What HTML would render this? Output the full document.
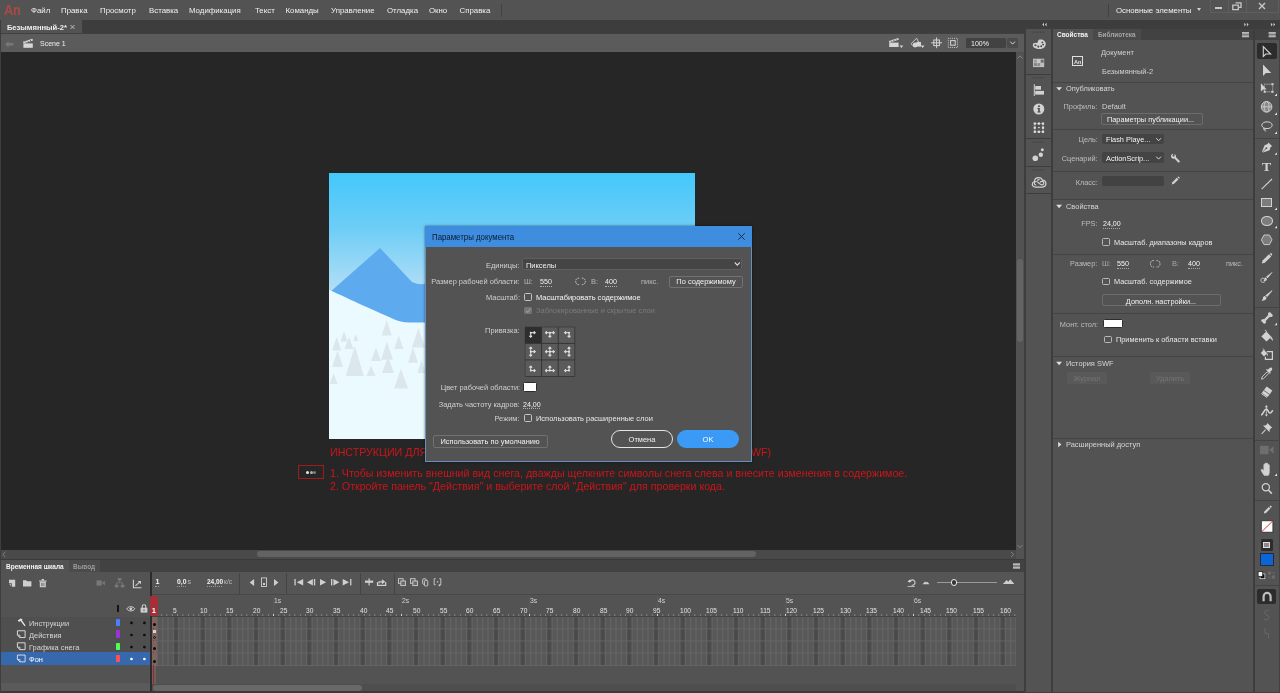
<!DOCTYPE html>
<html><head><meta charset="utf-8"><title>Animate</title>
<style>
*{box-sizing:border-box;margin:0;padding:0}
html,body{width:1280px;height:693px;overflow:hidden;background:#535353;font-family:"Liberation Sans",sans-serif;font-size:8px;color:#dcdcdc}
.abs{position:absolute}
#root{will-change:transform;position:relative;width:1280px;height:693px;overflow:hidden;background:#535353}
.t{position:absolute;white-space:nowrap;line-height:1}
</style></head><body>
<div id="root">
<div class="abs" style="left:0.00px;top:0.00px;width:1280.00px;height:20.00px;background:#535353;"></div>
<span class="t" style="top:3.00px;font-size:14.80px;color:#ad4a45;font-weight:bold;left:4.00px;transform:scaleX(0.86);transform-origin:0 0;letter-spacing:-0.3px;">An</span>
<span class="t" style="top:7.00px;font-size:7.85px;color:#f0f0f0;left:31.00px;transform:scaleX(1);transform-origin:0 0;">Файл</span>
<span class="t" style="top:7.00px;font-size:7.85px;color:#f0f0f0;left:61.00px;transform:scaleX(1);transform-origin:0 0;">Правка</span>
<span class="t" style="top:7.00px;font-size:7.85px;color:#f0f0f0;left:100.00px;transform:scaleX(1);transform-origin:0 0;">Просмотр</span>
<span class="t" style="top:7.00px;font-size:7.85px;color:#f0f0f0;left:149.00px;transform:scaleX(1);transform-origin:0 0;">Вставка</span>
<span class="t" style="top:7.00px;font-size:7.85px;color:#f0f0f0;left:189.00px;transform:scaleX(1);transform-origin:0 0;">Модификация</span>
<span class="t" style="top:7.00px;font-size:7.85px;color:#f0f0f0;left:255.00px;transform:scaleX(1);transform-origin:0 0;">Текст</span>
<span class="t" style="top:7.00px;font-size:7.85px;color:#f0f0f0;left:285.50px;transform:scaleX(1);transform-origin:0 0;">Команды</span>
<span class="t" style="top:7.00px;font-size:7.85px;color:#f0f0f0;left:331.00px;transform:scaleX(1);transform-origin:0 0;">Управление</span>
<span class="t" style="top:7.00px;font-size:7.85px;color:#f0f0f0;left:387.00px;transform:scaleX(1);transform-origin:0 0;">Отладка</span>
<span class="t" style="top:7.00px;font-size:7.85px;color:#f0f0f0;left:429.00px;transform:scaleX(1);transform-origin:0 0;">Окно</span>
<span class="t" style="top:7.00px;font-size:7.85px;color:#f0f0f0;left:459.50px;transform:scaleX(1);transform-origin:0 0;">Справка</span>
<div class="abs" style="left:501.00px;top:4.00px;width:1.00px;height:13.00px;background:#424242;"></div>
<div class="abs" style="left:1108.00px;top:4.00px;width:1.00px;height:13.00px;background:#424242;"></div>
<span class="t" style="top:7.00px;font-size:7.85px;color:#f0f0f0;left:1116.00px;transform:scaleX(1);transform-origin:0 0;">Основные элементы</span>
<div class="abs" style="left:1197px;top:8.4px;width:0;height:0;border-left:2.5px solid transparent;border-right:2.5px solid transparent;border-top:3px solid #d0d0d0"></div>
<div class="abs" style="left:1210.00px;top:0.00px;width:69.00px;height:13.00px;border:1px solid #5e5e5e;border-top:none;"></div>
<div class="abs" style="left:1228.00px;top:0.00px;width:1.00px;height:12.00px;background:#5e5e5e;"></div>
<div class="abs" style="left:1246.00px;top:0.00px;width:1.00px;height:12.00px;background:#5e5e5e;"></div>
<div class="abs" style="left:1215.00px;top:7.00px;width:7.00px;height:2.00px;background:#c8c8c8;"></div>
<svg class="abs" style="left:1232px;top:2px;overflow:visible;" width="11" height="10" viewBox="0 0 11 10"><g transform="translate(0.000 0.000)"><path d="M3.5 0.8h5.5v4.5h-2M0.8 3.2h5.5v4.5h-5.5z" fill="none" stroke="#c8c8c8" stroke-width="1.3"/></g></svg>
<svg class="abs" style="left:1258px;top:2px;overflow:visible;" width="9" height="9" viewBox="0 0 9 9"><g transform="translate(0.000 0.000)"><path d="M1 1l6 6M7 1l-6 6" fill="none" stroke="#c8c8c8" stroke-width="1.4"/></g></svg>
<div class="abs" style="left:0.00px;top:20.00px;width:1024.00px;height:14.00px;background:#3d3d3d;"></div>
<div class="abs" style="left:0.00px;top:20.00px;width:82.00px;height:14.00px;background:#535353;"></div>
<span class="t" style="top:24.00px;font-size:7.60px;color:#f0f0f0;font-weight:bold;left:6.90px;transform:scaleX(1);transform-origin:0 0;">Безымянный-2*</span>
<svg class="abs" style="left:70px;top:24px;overflow:visible;" width="6" height="6" viewBox="0 0 6 6"><g transform="translate(0.000 0.500)"><path d="M0.5 0.5l4 4M4.5 0.5l-4 4" stroke="#bdbdbd" stroke-width="1" fill="none"/></g></svg>
<div class="abs" style="left:0.00px;top:34.00px;width:1024.00px;height:18.00px;background:#5b5b5b;"></div>
<svg class="abs" style="left:5px;top:41px;overflow:visible;" width="9" height="7" viewBox="0 0 9 7"><g transform="translate(0.000 0.000)"><path d="M0 3.2L3.6 0v2h4.8v2.4H3.6v2z" fill="#777777"/></g></svg>
<svg class="abs" style="left:22px;top:38px;overflow:visible;" width="12" height="10" viewBox="0 0 12 10"><g transform="translate(0.800 0.200) scale(1.0000 1.0000) translate(-0.000 -0.000)"><path d="M0.2 3.6L9.6 0.6L10.2 2.4L0.8 5.4z" fill="#d6d6d6"/><path d="M2.2 3.2L3.4 4.4M4.6 2.4L5.8 3.6M7 1.6L8.2 2.8" stroke="#5b5b5b" stroke-width="0.9"/><rect x="0.6" y="5.2" width="9.4" height="4.4" fill="#d6d6d6"/></g></svg>
<span class="t" style="top:40.00px;font-size:7.80px;color:#efefef;left:40.00px;transform:scaleX(0.9);transform-origin:0 0;">Scene 1</span>
<svg class="abs" style="left:888px;top:37px;overflow:visible;" width="12" height="11" viewBox="0 0 12 11"><g transform="translate(0.600 0.400) scale(1.0000 1.0000) translate(-0.000 -0.000)"><path d="M0.2 3.6L9.6 0.6L10.2 2.4L0.8 5.4z" fill="#d6d6d6"/><path d="M2.2 3.2L3.4 4.4M4.6 2.4L5.8 3.6M7 1.6L8.2 2.8" stroke="#5b5b5b" stroke-width="0.9"/><rect x="0.6" y="5.2" width="9.4" height="4.4" fill="#d6d6d6"/></g></svg>
<svg class="abs" style="left:899px;top:45px;overflow:visible;" width="5" height="4" viewBox="0 0 5 4"><g transform="translate(0.600 0.600)"><path d="M0 0h3.6L1.8 2.4z" fill="#d6d6d6"/></g></svg>
<svg class="abs" style="left:910px;top:37px;overflow:visible;" width="12" height="12" viewBox="0 0 12 12"><g transform="translate(0.000 0.400)"><path d="M1 6.4L6.6 0.8L8.6 4.6L4.2 9.2z" fill="none" stroke="#d6d6d6" stroke-width="0.9"/><circle cx="5.2" cy="7.6" r="2.4" fill="#d6d6d6"/><rect x="6.4" y="4.6" width="4.6" height="4.6" fill="#d6d6d6"/></g></svg>
<svg class="abs" style="left:920px;top:45px;overflow:visible;" width="5" height="4" viewBox="0 0 5 4"><g transform="translate(0.800 0.600)"><path d="M0 0h3.6L1.8 2.4z" fill="#d6d6d6"/></g></svg>
<svg class="abs" style="left:931px;top:37px;overflow:visible;" width="12" height="12" viewBox="0 0 12 12"><g transform="translate(0.200 0.400)"><rect x="2.6" y="2.6" width="5.6" height="5.6" fill="none" stroke="#d6d6d6" stroke-width="1"/><path d="M5.4 0v10.8M0 5.4h10.8" stroke="#d6d6d6" stroke-width="1"/></g></svg>
<svg class="abs" style="left:947px;top:37px;overflow:visible;" width="12" height="12" viewBox="0 0 12 12"><g transform="translate(0.800 0.800)"><rect x="0.5" y="0.5" width="9.2" height="9.2" fill="none" stroke="#d6d6d6" stroke-width="0.8" stroke-dasharray="1 0.9"/><rect x="2.8" y="2.8" width="4.6" height="4.6" fill="none" stroke="#d6d6d6" stroke-width="1"/></g></svg>
<div class="abs" style="left:966.00px;top:37.60px;width:40.40px;height:10.60px;background:#424242;border-radius:1.5px;"></div>
<span class="t" style="top:40.00px;font-size:7.60px;color:#f0f0f0;left:970.70px;transform:scaleX(0.93);transform-origin:0 0;">100%</span>
<div class="abs" style="left:1007.30px;top:37.60px;width:10.60px;height:10.60px;background:#4b4b4b;border-radius:1.5px;"></div>
<svg class="abs" style="left:1009px;top:41px;overflow:visible;" width="7" height="4" viewBox="0 0 7 4"><g transform="translate(0.800 0.200)"><path d="M0.4 0.4L2.8 2.9L5.2 0.4" stroke="#d8d8d8" stroke-width="1" fill="none"/></g></svg>
<div class="abs" style="left:0.00px;top:51.50px;width:1024.00px;height:0.60px;background:#3a3a3a;"></div>
<div class="abs" style="left:0.00px;top:33.30px;width:1024.00px;height:0.90px;background:#404040;"></div>
<div class="abs" style="left:0.00px;top:52.00px;width:1016.00px;height:498.00px;background:#262626;"></div>
<div class="abs" style="left:329px;top:172.7px;width:366px;height:266px;background:linear-gradient(#43c8fc 0%,#6ccdf6 20%,#b2def6 44%,#c8e8f8 100%);overflow:hidden"><svg class="abs" style="left:0;top:0" width="366" height="266" viewBox="0 0 366 266"><path d="M0 120L51 75L83 109Q92 113 97 110L140 80L220 130L366 130L366 200L0 200z" fill="#5eaaee"/><path d="M0 116.8C20 126 50 140 68 147.4Q75 149.6 86 149.6L366 149.6L366 266L0 266z" fill="#ebfaff"/><g fill="#dce7ed"><path d="M7.7 164.0L12.2 177.6L3.2 177.6z"/><path d="M15.0 158.0L18.5 168.5L11.5 168.5z"/><path d="M20.0 164.0L24.5 176.0L15.5 176.0z"/><path d="M26.8 161.0L29.3 168.0L24.3 168.0z"/><path d="M8.6 177.6L14.1 194.0L3.1 194.0z"/><path d="M25.8 173.0L34.8 203.0L16.8 203.0z"/><path d="M4.6 200.0L8.6 211.0L0.6 211.0z"/><path d="M42.0 192.8L46.5 203.0L37.5 203.0z"/><path d="M47.0 174.6L52.0 188.0L42.0 188.0z"/><path d="M57.7 147.0L62.7 162.5L52.7 162.5z"/><path d="M58.0 168.5L64.0 186.7L52.0 186.7z"/><path d="M59.0 183.7L65.0 200.0L53.0 200.0z"/><path d="M69.8 162.5L74.3 176.0L65.3 176.0z"/><path d="M72.0 195.8L79.0 215.5L65.0 215.5z"/><path d="M84.0 174.6L89.0 189.7L79.0 189.7z"/><path d="M89.5 155.0L96.0 174.6L83.0 174.6z"/><path d="M92.5 186.7L96.5 200.0L88.5 200.0z"/></g></svg></div>
<span class="t" style="top:447.00px;font-size:10.67px;color:#cb151b;left:330.00px;transform:scaleX(1);transform-origin:0 0;">ИНСТРУКЦИИ ДЛЯ</span>
<span class="t" style="top:447.00px;font-size:10.67px;color:#cb151b;right:509.00px;transform:scaleX(1);transform-origin:100% 0;">WF)</span>
<span class="t" style="top:468.00px;font-size:10.67px;color:#cb151b;left:330.00px;transform:scaleX(1);transform-origin:0 0;">1. Чтобы изменить внешний вид снега, дважды щелкните символы снега слева и внесите изменения в содержимое.</span>
<span class="t" style="top:481.00px;font-size:10.67px;color:#cb151b;left:330.00px;transform:scaleX(1);transform-origin:0 0;">2. Откройте панель "Действия" и выберите слой "Действия" для проверки кода.</span>
<div class="abs" style="left:298.00px;top:464.50px;width:26.00px;height:14.00px;border:1px solid #a01a1e;"></div>
<div class="abs" style="left:306.00px;top:470.50px;width:3.00px;height:3.00px;background:#e8e8e8;border-radius:2px;"></div>
<div class="abs" style="left:309.50px;top:470.50px;width:3.00px;height:3.00px;background:#b0b0b0;border-radius:2px;"></div>
<div class="abs" style="left:313.00px;top:470.50px;width:3.00px;height:3.00px;background:#808080;border-radius:2px;"></div>
<div class="abs" style="left:424.90px;top:226.20px;width:327.20px;height:235.70px;background:#535353;box-shadow:0 0 2.5px rgba(0,0,0,.55);border:1px solid #6490bd;"></div>
<div class="abs" style="left:424.90px;top:226.20px;width:327.20px;height:20.60px;background:#3e8ddf;"></div>
<span class="t" style="top:233.00px;font-size:8.30px;color:#0b1b33;left:431.80px;transform:scaleX(0.945);transform-origin:0 0;">Параметры документа</span>
<svg class="abs" style="left:738px;top:233px;overflow:visible;" width="8" height="8" viewBox="0 0 8 8"><g transform="translate(0.000 0.000)"><path d="M0.3 0.3l6.4 6.4M6.7 0.3l-6.4 6.4" stroke="#10243f" stroke-width="0.9" fill="none"/></g></svg>
<span class="t" style="top:262.00px;font-size:7.90px;color:#cfcfcf;right:760.50px;transform:scaleX(0.945);transform-origin:100% 0;">Единицы:</span>
<div class="abs" style="left:521.70px;top:257.80px;width:220.60px;height:12.00px;background:#454545;border:1px solid #5f5f5f;border-radius:2px;"></div>
<span class="t" style="top:262.00px;font-size:7.90px;color:#f2f2f2;left:525.80px;transform:scaleX(0.945);transform-origin:0 0;">Пикселы</span>
<svg class="abs" style="left:734px;top:262px;overflow:visible;" width="7" height="5" viewBox="0 0 7 5"><g transform="translate(0.300 0.000)"><path d="M0.5 0.5l2.5 2.6l2.5-2.6" stroke="#d8d8d8" stroke-width="1.1" fill="none"/></g></svg>
<span class="t" style="top:278.00px;font-size:7.90px;color:#cfcfcf;right:760.00px;transform:scaleX(0.945);transform-origin:100% 0;">Размер рабочей области:</span>
<span class="t" style="top:278.00px;font-size:7.90px;color:#b8b8b8;left:523.60px;transform:scaleX(0.945);transform-origin:0 0;">Ш:</span>
<span class="t" style="top:278.00px;font-size:7.90px;color:#f2f2f2;left:540.00px;transform:scaleX(0.9);transform-origin:0 0;">550</span>
<div class="abs" style="left:540.00px;top:286.30px;width:11.60px;height:1.00px;border-top:1px dotted #b0b0b0;"></div>
<svg class="abs" style="left:575px;top:277px;overflow:visible;" width="11" height="10" viewBox="0 0 11 10"><g transform="translate(0.500 0.000)"><path d="M3.6 1.2H2.8a2.6 3.2 0 0 0 0 6.4h0.8M6.4 1.2h0.8a2.6 3.2 0 0 1 0 6.4H6.4" stroke="#d0d0d0" stroke-width="1" fill="none" stroke-dasharray="1.6 0.8"/></g></svg>
<span class="t" style="top:278.00px;font-size:7.90px;color:#b8b8b8;left:591.00px;transform:scaleX(0.945);transform-origin:0 0;">В:</span>
<span class="t" style="top:278.00px;font-size:7.90px;color:#f2f2f2;left:605.00px;transform:scaleX(0.9);transform-origin:0 0;">400</span>
<div class="abs" style="left:605.00px;top:286.30px;width:12.00px;height:1.00px;border-top:1px dotted #b0b0b0;"></div>
<span class="t" style="top:278.00px;font-size:7.90px;color:#b8b8b8;left:640.60px;transform:scaleX(0.945);transform-origin:0 0;">пикс.</span>
<div class="abs" style="left:669.20px;top:275.60px;width:74.10px;height:12.00px;border:1px solid #717171;border-radius:2px;"></div>
<span class="t" style="top:278.00px;font-size:7.90px;color:#f2f2f2;left:706.20px;transform:translateX(-50%) scaleX(0.945);">По содержимому</span>
<span class="t" style="top:294.00px;font-size:7.90px;color:#cfcfcf;right:760.00px;transform:scaleX(0.945);transform-origin:100% 0;">Масштаб:</span>
<div class="abs" style="left:524.20px;top:292.90px;width:7.70px;height:7.70px;border:1px solid #c4c4c4;border-radius:1.5px;"></div>
<span class="t" style="top:294.00px;font-size:7.90px;color:#f6f6f6;left:535.70px;transform:scaleX(0.945);transform-origin:0 0;">Масштабировать содержимое</span>
<div class="abs" style="left:524.20px;top:306.70px;width:7.70px;height:7.70px;background:#747474;border-radius:1.5px;"></div>
<svg class="abs" style="left:524px;top:306px;overflow:visible;" width="9" height="9" viewBox="0 0 9 9"><g transform="translate(0.200 0.700)"><path d="M1.8 4l1.6 1.8L6.2 2" stroke="#9a9a9a" stroke-width="1.1" fill="none"/></g></svg>
<span class="t" style="top:307.00px;font-size:7.90px;color:#7b7b7b;left:535.70px;transform:scaleX(0.945);transform-origin:0 0;">Заблокированные и скрытые слои</span>
<span class="t" style="top:327.00px;font-size:7.90px;color:#cfcfcf;right:760.00px;transform:scaleX(0.945);transform-origin:100% 0;">Привязка:</span>
<svg class="abs" style="left:524px;top:326px;overflow:visible;" width="52" height="51" viewBox="0 0 52 51"><g transform="translate(0.800 0.700)"><rect width="50.4" height="50.1" fill="#333333"/></g></svg>
<svg class="abs" style="left:524px;top:326px;overflow:visible;" width="52" height="51" viewBox="0 0 52 51"><g transform="translate(0.800 0.700)"><rect x="0.60" y="0.60" width="15.7" height="15.6" fill="#2e2e2e"/><path d="M5.95 6.00L9.25 6.00M10.75 6.00L9.25 7.30L9.25 4.70zM5.95 6.00L5.95 9.30M5.95 10.80L4.65 9.30L7.25 9.30z" stroke="#dedede" stroke-width="1" fill="#dedede" stroke-linejoin="miter"/><circle cx="5.95" cy="6.00" r="1" fill="#e6e6e6"/><rect x="17.25" y="0.60" width="15.7" height="15.6" fill="#5b5b5b"/><path d="M25.10 6.00L21.80 6.00M20.30 6.00L21.80 4.70L21.80 7.30zM25.10 6.00L28.40 6.00M29.90 6.00L28.40 7.30L28.40 4.70zM25.10 6.00L25.10 9.30M25.10 10.80L23.80 9.30L26.40 9.30z" stroke="#dedede" stroke-width="1" fill="#dedede" stroke-linejoin="miter"/><circle cx="25.10" cy="6.00" r="1" fill="#e6e6e6"/><rect x="33.90" y="0.60" width="15.7" height="15.6" fill="#5b5b5b"/><path d="M44.25 6.00L40.95 6.00M39.45 6.00L40.95 4.70L40.95 7.30zM44.25 6.00L44.25 9.30M44.25 10.80L42.95 9.30L45.55 9.30z" stroke="#dedede" stroke-width="1" fill="#dedede" stroke-linejoin="miter"/><circle cx="44.25" cy="6.00" r="1" fill="#e6e6e6"/><rect x="0.60" y="17.15" width="15.7" height="15.6" fill="#5b5b5b"/><path d="M5.95 24.95L5.95 21.65M5.95 20.15L7.25 21.65L4.65 21.65zM5.95 24.95L9.25 24.95M10.75 24.95L9.25 26.25L9.25 23.65zM5.95 24.95L5.95 28.25M5.95 29.75L4.65 28.25L7.25 28.25z" stroke="#dedede" stroke-width="1" fill="#dedede" stroke-linejoin="miter"/><circle cx="5.95" cy="24.95" r="1" fill="#e6e6e6"/><rect x="17.25" y="17.15" width="15.7" height="15.6" fill="#5b5b5b"/><path d="M25.10 24.95L21.80 24.95M20.30 24.95L21.80 23.65L21.80 26.25zM25.10 24.95L28.40 24.95M29.90 24.95L28.40 26.25L28.40 23.65zM25.10 24.95L25.10 21.65M25.10 20.15L26.40 21.65L23.80 21.65zM25.10 24.95L25.10 28.25M25.10 29.75L23.80 28.25L26.40 28.25z" stroke="#dedede" stroke-width="1" fill="#dedede" stroke-linejoin="miter"/><circle cx="25.10" cy="24.95" r="1" fill="#e6e6e6"/><rect x="33.90" y="17.15" width="15.7" height="15.6" fill="#5b5b5b"/><path d="M44.25 24.95L44.25 21.65M44.25 20.15L45.55 21.65L42.95 21.65zM44.25 24.95L40.95 24.95M39.45 24.95L40.95 23.65L40.95 26.25zM44.25 24.95L44.25 28.25M44.25 29.75L42.95 28.25L45.55 28.25z" stroke="#dedede" stroke-width="1" fill="#dedede" stroke-linejoin="miter"/><circle cx="44.25" cy="24.95" r="1" fill="#e6e6e6"/><rect x="0.60" y="33.70" width="15.7" height="15.6" fill="#5b5b5b"/><path d="M5.95 43.90L5.95 40.60M5.95 39.10L7.25 40.60L4.65 40.60zM5.95 43.90L9.25 43.90M10.75 43.90L9.25 45.20L9.25 42.60z" stroke="#dedede" stroke-width="1" fill="#dedede" stroke-linejoin="miter"/><circle cx="5.95" cy="43.90" r="1" fill="#e6e6e6"/><rect x="17.25" y="33.70" width="15.7" height="15.6" fill="#5b5b5b"/><path d="M25.10 43.90L21.80 43.90M20.30 43.90L21.80 42.60L21.80 45.20zM25.10 43.90L28.40 43.90M29.90 43.90L28.40 45.20L28.40 42.60zM25.10 43.90L25.10 40.60M25.10 39.10L26.40 40.60L23.80 40.60z" stroke="#dedede" stroke-width="1" fill="#dedede" stroke-linejoin="miter"/><circle cx="25.10" cy="43.90" r="1" fill="#e6e6e6"/><rect x="33.90" y="33.70" width="15.7" height="15.6" fill="#5b5b5b"/><path d="M44.25 43.90L40.95 43.90M39.45 43.90L40.95 42.60L40.95 45.20zM44.25 43.90L44.25 40.60M44.25 39.10L45.55 40.60L42.95 40.60z" stroke="#dedede" stroke-width="1" fill="#dedede" stroke-linejoin="miter"/><circle cx="44.25" cy="43.90" r="1" fill="#e6e6e6"/></g></svg>
<span class="t" style="top:384.00px;font-size:7.90px;color:#cfcfcf;right:760.00px;transform:scaleX(0.945);transform-origin:100% 0;">Цвет рабочей области:</span>
<div class="abs" style="left:523.30px;top:381.70px;width:13.30px;height:10.80px;background:#ffffff;border:1px solid #2c2c2c;border-radius:1.5px;"></div>
<span class="t" style="top:401.00px;font-size:7.90px;color:#cfcfcf;right:760.50px;transform:scaleX(0.945);transform-origin:100% 0;">Задать частоту кадров:</span>
<span class="t" style="top:401.00px;font-size:7.90px;color:#f2f2f2;left:522.70px;transform:scaleX(0.9);transform-origin:0 0;">24,00</span>
<div class="abs" style="left:522.70px;top:408.30px;width:17.30px;height:1.00px;border-top:1px dotted #b0b0b0;"></div>
<span class="t" style="top:415.00px;font-size:7.90px;color:#cfcfcf;right:760.40px;transform:scaleX(0.945);transform-origin:100% 0;">Режим:</span>
<div class="abs" style="left:524.20px;top:414.40px;width:7.70px;height:7.70px;border:1px solid #c4c4c4;border-radius:1.5px;"></div>
<span class="t" style="top:415.00px;font-size:7.90px;color:#e8e8e8;left:535.60px;transform:scaleX(0.945);transform-origin:0 0;">Использовать расширенные слои</span>
<div class="abs" style="left:432.70px;top:435.10px;width:115.00px;height:12.60px;border:1px solid #717171;border-radius:2px;"></div>
<span class="t" style="top:438.00px;font-size:7.90px;color:#f2f2f2;left:490.00px;transform:translateX(-50%) scaleX(0.945);">Использовать по умолчанию</span>
<div class="abs" style="left:611.00px;top:430.20px;width:61.80px;height:18.00px;border:1px solid #e4e4e4;border-radius:9px;"></div>
<span class="t" style="top:436.00px;font-size:7.90px;color:#f2f2f2;left:641.60px;transform:translateX(-50%) scaleX(0.945);">Отмена</span>
<div class="abs" style="left:677.00px;top:430.20px;width:62.00px;height:18.00px;background:#3b9af5;border-radius:9px;"></div>
<span class="t" style="top:436.00px;font-size:7.90px;color:#ffffff;left:708.00px;transform:translateX(-50%) scaleX(0.945);">OK</span>
<div class="abs" style="left:1016.00px;top:52.00px;width:8.00px;height:507.00px;background:#525252;"></div>
<div class="abs" style="left:1017.00px;top:259.00px;width:6.30px;height:82.50px;background:#636363;border-radius:3px;"></div>
<svg class="abs" style="left:1017px;top:55px;overflow:visible;" width="7" height="5" viewBox="0 0 7 5"><g transform="translate(0.000 0.000)"><path d="M0.5 3.5L3 0.8L5.5 3.5" stroke="#8a8a8a" stroke-width="0.9" fill="none"/></g></svg>
<svg class="abs" style="left:1017px;top:544px;overflow:visible;" width="7" height="5" viewBox="0 0 7 5"><g transform="translate(0.000 0.500)"><path d="M0.5 0.5L3 3.2L5.5 0.5" stroke="#8a8a8a" stroke-width="0.9" fill="none"/></g></svg>
<div class="abs" style="left:0.00px;top:550.00px;width:1016.00px;height:9.00px;background:#4a4a4a;"></div>
<div class="abs" style="left:257.00px;top:551.30px;width:499.00px;height:6.00px;background:#636363;border-radius:3px;"></div>
<svg class="abs" style="left:2px;top:551px;overflow:visible;" width="5" height="7" viewBox="0 0 5 7"><g transform="translate(0.000 0.500)"><path d="M3.4 0.5L0.8 3L3.4 5.5" stroke="#8a8a8a" stroke-width="0.9" fill="none"/></g></svg>
<svg class="abs" style="left:1010px;top:551px;overflow:visible;" width="5" height="7" viewBox="0 0 5 7"><g transform="translate(0.500 0.500)"><path d="M0.6 0.5L3.2 3L0.6 5.5" stroke="#8a8a8a" stroke-width="0.9" fill="none"/></g></svg>
<div class="abs" style="left:0.00px;top:559.00px;width:1024.00px;height:134.00px;background:#535353;"></div>
<div class="abs" style="left:0.00px;top:559.00px;width:1024.00px;height:1.00px;background:#3a3a3a;"></div>
<div class="abs" style="left:0.00px;top:560.00px;width:1024.00px;height:12.00px;background:#424242;"></div>
<div class="abs" style="left:0.00px;top:560.00px;width:68.80px;height:12.00px;background:#535353;"></div>
<span class="t" style="top:563.00px;font-size:7.30px;color:#f4f4f4;font-weight:bold;left:5.60px;transform:scaleX(0.89);transform-origin:0 0;">Временная шкала</span>
<div class="abs" style="left:69.30px;top:560.00px;width:31.00px;height:12.00px;background:#4b4b4b;"></div>
<span class="t" style="top:563.00px;font-size:7.30px;color:#9a9a9a;font-weight:bold;left:73.40px;transform:scaleX(0.89);transform-origin:0 0;">Вывод</span>
<svg class="abs" style="left:1013px;top:563px;overflow:visible;" width="8" height="6" viewBox="0 0 8 6"><g transform="translate(0.000 0.400)"><rect width="7" height="5.2" fill="#7c7c7c"/><rect width="7" height="1.7" fill="#b8b8b8"/><rect y="3.5" width="7" height="1.7" fill="#b8b8b8"/></g></svg>
<div class="abs" style="left:152.00px;top:572.00px;width:872.00px;height:22.00px;background:#555555;"></div>
<div class="abs" style="left:152.00px;top:594.00px;width:872.00px;height:1.00px;background:#484848;"></div>
<div class="abs" style="left:238.70px;top:572.50px;width:1.00px;height:21.50px;background:#444444;"></div>
<div class="abs" style="left:286.30px;top:572.50px;width:1.00px;height:21.50px;background:#444444;"></div>
<div class="abs" style="left:360.00px;top:572.50px;width:1.00px;height:21.50px;background:#444444;"></div>
<div class="abs" style="left:393.50px;top:572.50px;width:1.00px;height:21.50px;background:#444444;"></div>
<svg class="abs" style="left:8px;top:579px;overflow:visible;" width="8" height="8" viewBox="0 0 8 8"><g transform="translate(0.600 0.700)"><path d="M0.4 0h6.2v7H3.2V3.6H0.4z" fill="#cfcfcf"/><path d="M0.6 4.6h1.8v1.8z" fill="#cfcfcf"/></g></svg>
<svg class="abs" style="left:23px;top:579px;overflow:visible;" width="9" height="8" viewBox="0 0 9 8"><g transform="translate(0.000 0.600)"><path d="M0 0.6h3.2l0.8 1h4.4v5.4H0z" fill="#cfcfcf"/></g></svg>
<svg class="abs" style="left:39px;top:579px;overflow:visible;" width="8" height="9" viewBox="0 0 8 9"><g transform="translate(0.000 0.000)"><path d="M0 1.4h7.6v1H0zM2.6 0h2.4v1.2H2.6zM0.8 2.8h6v5.4h-6z" fill="#cfcfcf"/><path d="M2.6 3.8v3.4M3.8 3.8v3.4M5 3.8v3.4" stroke="#535353" stroke-width="0.6"/></g></svg>
<svg class="abs" style="left:96px;top:580px;overflow:visible;" width="9" height="7" viewBox="0 0 9 7"><g transform="translate(0.500 0.000)"><rect x="0" y="0.4" width="5.2" height="5.2" fill="#787878"/><path d="M5.4 3L8.4 0.6v4.8z" fill="#787878"/></g></svg>
<svg class="abs" style="left:114px;top:578px;overflow:visible;" width="11" height="11" viewBox="0 0 11 11"><g transform="translate(0.800 0.000)"><rect x="3" y="0" width="3.6" height="2.6" fill="#787878"/><rect x="0" y="6.6" width="3.6" height="2.8" fill="#787878"/><rect x="6" y="6.6" width="3.6" height="2.8" fill="#787878"/><path d="M4.8 2.6v2.2M1.8 6.6V4.8h6v1.8" stroke="#787878" stroke-width="0.8" fill="none"/></g></svg>
<svg class="abs" style="left:132px;top:579px;overflow:visible;" width="10" height="10" viewBox="0 0 10 10"><g transform="translate(0.800 0.800)"><path d="M0.6 0v7.9h8" stroke="#cfcfcf" stroke-width="1.1" fill="none"/><path d="M2.6 6L6.6 2.6" stroke="#cfcfcf" stroke-width="1.1" fill="none"/><path d="M4.8 1.2h3.4v3.2z" fill="#cfcfcf"/></g></svg>
<span class="t" style="top:578.00px;font-size:7.20px;color:#f4f4f4;font-weight:bold;left:155.50px;transform:scaleX(1);transform-origin:0 0;">1</span>
<div class="abs" style="left:155.30px;top:586.00px;width:3.40px;height:1.00px;border-top:1px dotted #9a9a9a;"></div>
<span class="t" style="top:578.00px;font-size:7.20px;color:#f4f4f4;font-weight:bold;left:176.90px;transform:scaleX(0.95);transform-origin:0 0;">0,0</span>
<span class="t" style="top:578.00px;font-size:7.00px;color:#bdbdbd;left:187.60px;transform:scaleX(1);transform-origin:0 0;">s</span>
<div class="abs" style="left:176.90px;top:586.00px;width:9.40px;height:1.00px;border-top:1px dotted #9a9a9a;"></div>
<span class="t" style="top:578.00px;font-size:7.20px;color:#f4f4f4;font-weight:bold;left:206.90px;transform:scaleX(0.9);transform-origin:0 0;">24,00</span>
<span class="t" style="top:578.00px;font-size:7.00px;color:#bdbdbd;left:223.80px;transform:scaleX(0.95);transform-origin:0 0;">к/с</span>
<div class="abs" style="left:206.90px;top:586.00px;width:15.40px;height:1.00px;border-top:1px dotted #9a9a9a;"></div>
<svg class="abs" style="left:249px;top:579px;overflow:visible;" width="6" height="8" viewBox="0 0 6 8"><g transform="translate(0.700 0.000)"><path d="M4.4 0v7L0 3.5z" fill="#cfcfcf"/></g></svg>
<svg class="abs" style="left:261px;top:577px;overflow:visible;" width="7" height="11" viewBox="0 0 7 11"><g transform="translate(0.000 0.400)"><rect x="0.5" y="0.5" width="5" height="8.6" fill="none" stroke="#cfcfcf" stroke-width="0.9"/><rect x="2" y="5.6" width="2" height="2" fill="#cfcfcf"/></g></svg>
<svg class="abs" style="left:274px;top:579px;overflow:visible;" width="5" height="8" viewBox="0 0 5 8"><g transform="translate(0.000 0.000)"><path d="M0 0v7L4.4 3.5z" fill="#cfcfcf"/></g></svg>
<svg class="abs" style="left:294px;top:579px;overflow:visible;" width="10" height="7" viewBox="0 0 10 7"><g transform="translate(0.400 0.000)"><rect x="0" y="0" width="1.3" height="6.4" fill="#cfcfcf"/><path d="M8.8 0v6.4L2.4 3.2z" fill="#cfcfcf"/></g></svg>
<svg class="abs" style="left:306px;top:579px;overflow:visible;" width="10" height="7" viewBox="0 0 10 7"><g transform="translate(0.900 0.000)"><path d="M6 0v6.4L0 3.2z" fill="#cfcfcf"/><rect x="7" y="0" width="1.3" height="6.4" fill="#cfcfcf"/></g></svg>
<svg class="abs" style="left:320px;top:579px;overflow:visible;" width="7" height="7" viewBox="0 0 7 7"><g transform="translate(0.000 0.000)"><path d="M0 0v6.4L6.2 3.2z" fill="#cfcfcf"/></g></svg>
<svg class="abs" style="left:330px;top:579px;overflow:visible;" width="10" height="7" viewBox="0 0 10 7"><g transform="translate(0.600 0.000)"><rect x="0.4" y="0" width="1.3" height="6.4" fill="#cfcfcf"/><path d="M2.8 0v6.4L8.8 3.2z" fill="#cfcfcf"/></g></svg>
<svg class="abs" style="left:342px;top:579px;overflow:visible;" width="10" height="7" viewBox="0 0 10 7"><g transform="translate(0.700 0.000)"><path d="M0 0v6.4L6.4 3.2z" fill="#cfcfcf"/><rect x="7.4" y="0" width="1.3" height="6.4" fill="#cfcfcf"/></g></svg>
<svg class="abs" style="left:365px;top:578px;overflow:visible;" width="9" height="8" viewBox="0 0 9 8"><g transform="translate(0.000 0.400)"><rect x="0" y="2.2" width="8.2" height="2.2" fill="#cfcfcf"/><rect x="3.5" y="0" width="1.2" height="7" fill="#cfcfcf"/></g></svg>
<svg class="abs" style="left:376px;top:578px;overflow:visible;" width="11" height="9" viewBox="0 0 11 9"><g transform="translate(0.900 0.600)"><path d="M0.6 3.4v3.4h8.2V3.4M2.2 4.8V3.2h3.4" stroke="#cfcfcf" stroke-width="1.2" fill="none"/><path d="M5 0.6L8.4 3.2L5 5.6z" fill="#cfcfcf"/></g></svg>
<svg class="abs" style="left:398px;top:578px;overflow:visible;" width="8" height="9" viewBox="0 0 8 9"><g transform="translate(0.000 0.200)"><rect x="0.5" y="0.5" width="4.6" height="4.6" fill="none" stroke="#cfcfcf" stroke-width="0.9"/><rect x="2.8" y="2.8" width="4.6" height="4.6" fill="#6a6a6a" stroke="#cfcfcf" stroke-width="0.9"/></g></svg>
<svg class="abs" style="left:410px;top:578px;overflow:visible;" width="8" height="9" viewBox="0 0 8 9"><g transform="translate(0.000 0.200)"><rect x="0.5" y="0.5" width="4.6" height="4.6" fill="none" stroke="#cfcfcf" stroke-width="0.9"/><rect x="2.8" y="2.8" width="4.6" height="4.6" fill="#6a6a6a" stroke="#cfcfcf" stroke-width="0.9"/></g></svg>
<svg class="abs" style="left:422px;top:578px;overflow:visible;" width="7" height="9" viewBox="0 0 7 9"><g transform="translate(0.200 0.200)"><rect x="0.5" y="0.5" width="3.4" height="5.6" rx="1" fill="none" stroke="#cfcfcf" stroke-width="0.9"/><rect x="2.2" y="2.2" width="3.4" height="5.6" rx="1" fill="#5a5a5a" stroke="#cfcfcf" stroke-width="0.9"/></g></svg>
<svg class="abs" style="left:433px;top:578px;overflow:visible;" width="9" height="9" viewBox="0 0 9 9"><g transform="translate(0.700 0.200)"><path d="M2 0.5H0.5v6H2M5.6 0.5h1.5v6H5.6" stroke="#cfcfcf" stroke-width="0.9" fill="none"/><rect x="3.2" y="3" width="1.3" height="1.3" fill="#cfcfcf"/><path d="M4.4 6.6h2.8L5.8 8.2z" fill="#cfcfcf"/></g></svg>
<svg class="abs" style="left:907px;top:579px;overflow:visible;" width="9" height="8" viewBox="0 0 9 8"><g transform="translate(0.000 0.000)"><path d="M2.6 3.6A2.7 2.7 0 1 1 4.6 6.2" stroke="#cfcfcf" stroke-width="1.1" fill="none"/><path d="M0.4 3h4.2L2.5 0.6z" fill="#cfcfcf"/><rect x="0.6" y="7" width="7.2" height="0.8" fill="#cfcfcf"/></g></svg>
<svg class="abs" style="left:922px;top:581px;overflow:visible;" width="8" height="4" viewBox="0 0 8 4"><g transform="translate(0.500 0.000)"><path d="M0 3.2L2.6 0.4L3.8 1.6L4.8 0.8L7 3.2z" fill="#cfcfcf"/></g></svg>
<div class="abs" style="left:936.60px;top:582.20px;width:60.00px;height:0.90px;background:#9a9a9a;"></div>
<div class="abs" style="left:950.8px;top:579.3px;width:6.6px;height:6.6px;border-radius:50%;background:#333;border:1.3px solid #ececec"></div>
<svg class="abs" style="left:1002px;top:579px;overflow:visible;" width="13" height="6" viewBox="0 0 13 6"><g transform="translate(0.900 0.300)"><path d="M0 4.8L3.8 0.8L5.4 2.4L7.4 0L11.4 4.8z" fill="#cfcfcf"/></g></svg>
<div class="abs" style="left:150.20px;top:572.00px;width:1.90px;height:121.00px;background:#2c2c2c;"></div>
<div class="abs" style="left:116.60px;top:605.40px;width:2.80px;height:6.80px;border:0.9px solid #141414;"></div>
<svg class="abs" style="left:126px;top:605px;overflow:visible;" width="10" height="8" viewBox="0 0 10 8"><g transform="translate(0.500 0.600)"><path d="M0.3 3.2C2 0.4 6.6 0.4 8.3 3.2C6.6 6 2 6 0.3 3.2z" fill="none" stroke="#cfcfcf" stroke-width="1"/><circle cx="4.3" cy="3.2" r="1.4" fill="#cfcfcf"/></g></svg>
<svg class="abs" style="left:140px;top:604px;overflow:visible;" width="8" height="9" viewBox="0 0 8 9"><g transform="translate(0.600 0.000)"><path d="M1.6 4V2.6a1.8 1.8 0 0 1 3.6 0V4" stroke="#cfcfcf" stroke-width="1.1" fill="none"/><rect x="0" y="3.8" width="6.8" height="4.8" fill="#cfcfcf"/><rect x="2.9" y="5.4" width="1" height="1.6" fill="#535353"/></g></svg>
<div class="abs" style="left:273.30px;top:595.00px;width:0.90px;height:21.00px;background:#5a5a5a;"></div>
<span class="t" style="top:597.00px;font-size:7.60px;color:#d4d4d4;left:274.30px;transform:scaleX(0.9);transform-origin:0 0;">1s</span>
<div class="abs" style="left:273.00px;top:614.00px;width:1.00px;height:2.20px;background:#f0f0f0;"></div>
<div class="abs" style="left:401.30px;top:595.00px;width:0.90px;height:21.00px;background:#5a5a5a;"></div>
<span class="t" style="top:597.00px;font-size:7.60px;color:#d4d4d4;left:402.30px;transform:scaleX(0.9);transform-origin:0 0;">2s</span>
<div class="abs" style="left:401.00px;top:614.00px;width:1.00px;height:2.20px;background:#f0f0f0;"></div>
<div class="abs" style="left:529.30px;top:595.00px;width:0.90px;height:21.00px;background:#5a5a5a;"></div>
<span class="t" style="top:597.00px;font-size:7.60px;color:#d4d4d4;left:530.30px;transform:scaleX(0.9);transform-origin:0 0;">3s</span>
<div class="abs" style="left:529.00px;top:614.00px;width:1.00px;height:2.20px;background:#f0f0f0;"></div>
<div class="abs" style="left:657.30px;top:595.00px;width:0.90px;height:21.00px;background:#5a5a5a;"></div>
<span class="t" style="top:597.00px;font-size:7.60px;color:#d4d4d4;left:658.30px;transform:scaleX(0.9);transform-origin:0 0;">4s</span>
<div class="abs" style="left:657.00px;top:614.00px;width:1.00px;height:2.20px;background:#f0f0f0;"></div>
<div class="abs" style="left:785.30px;top:595.00px;width:0.90px;height:21.00px;background:#5a5a5a;"></div>
<span class="t" style="top:597.00px;font-size:7.60px;color:#d4d4d4;left:786.30px;transform:scaleX(0.9);transform-origin:0 0;">5s</span>
<div class="abs" style="left:785.00px;top:614.00px;width:1.00px;height:2.20px;background:#f0f0f0;"></div>
<div class="abs" style="left:913.30px;top:595.00px;width:0.90px;height:21.00px;background:#5a5a5a;"></div>
<span class="t" style="top:597.00px;font-size:7.60px;color:#d4d4d4;left:914.30px;transform:scaleX(0.9);transform-origin:0 0;">6s</span>
<div class="abs" style="left:913.00px;top:614.00px;width:1.00px;height:2.20px;background:#f0f0f0;"></div>
<span class="t" style="top:607.00px;font-size:7.60px;color:#e4e4e4;left:172.93px;transform:scaleX(0.87);transform-origin:0 0;">5</span>
<span class="t" style="top:607.00px;font-size:7.60px;color:#e4e4e4;left:199.60px;transform:scaleX(0.87);transform-origin:0 0;">10</span>
<span class="t" style="top:607.00px;font-size:7.60px;color:#e4e4e4;left:226.27px;transform:scaleX(0.87);transform-origin:0 0;">15</span>
<span class="t" style="top:607.00px;font-size:7.60px;color:#e4e4e4;left:252.93px;transform:scaleX(0.87);transform-origin:0 0;">20</span>
<span class="t" style="top:607.00px;font-size:7.60px;color:#e4e4e4;left:279.60px;transform:scaleX(0.87);transform-origin:0 0;">25</span>
<span class="t" style="top:607.00px;font-size:7.60px;color:#e4e4e4;left:306.27px;transform:scaleX(0.87);transform-origin:0 0;">30</span>
<span class="t" style="top:607.00px;font-size:7.60px;color:#e4e4e4;left:332.93px;transform:scaleX(0.87);transform-origin:0 0;">35</span>
<span class="t" style="top:607.00px;font-size:7.60px;color:#e4e4e4;left:359.60px;transform:scaleX(0.87);transform-origin:0 0;">40</span>
<span class="t" style="top:607.00px;font-size:7.60px;color:#e4e4e4;left:386.27px;transform:scaleX(0.87);transform-origin:0 0;">45</span>
<span class="t" style="top:607.00px;font-size:7.60px;color:#e4e4e4;left:412.93px;transform:scaleX(0.87);transform-origin:0 0;">50</span>
<span class="t" style="top:607.00px;font-size:7.60px;color:#e4e4e4;left:439.60px;transform:scaleX(0.87);transform-origin:0 0;">55</span>
<span class="t" style="top:607.00px;font-size:7.60px;color:#e4e4e4;left:466.27px;transform:scaleX(0.87);transform-origin:0 0;">60</span>
<span class="t" style="top:607.00px;font-size:7.60px;color:#e4e4e4;left:492.93px;transform:scaleX(0.87);transform-origin:0 0;">65</span>
<span class="t" style="top:607.00px;font-size:7.60px;color:#e4e4e4;left:519.60px;transform:scaleX(0.87);transform-origin:0 0;">70</span>
<span class="t" style="top:607.00px;font-size:7.60px;color:#e4e4e4;left:546.27px;transform:scaleX(0.87);transform-origin:0 0;">75</span>
<span class="t" style="top:607.00px;font-size:7.60px;color:#e4e4e4;left:572.93px;transform:scaleX(0.87);transform-origin:0 0;">80</span>
<span class="t" style="top:607.00px;font-size:7.60px;color:#e4e4e4;left:599.60px;transform:scaleX(0.87);transform-origin:0 0;">85</span>
<span class="t" style="top:607.00px;font-size:7.60px;color:#e4e4e4;left:626.27px;transform:scaleX(0.87);transform-origin:0 0;">90</span>
<span class="t" style="top:607.00px;font-size:7.60px;color:#e4e4e4;left:652.93px;transform:scaleX(0.87);transform-origin:0 0;">95</span>
<span class="t" style="top:607.00px;font-size:7.60px;color:#e4e4e4;left:679.60px;transform:scaleX(0.87);transform-origin:0 0;">100</span>
<span class="t" style="top:607.00px;font-size:7.60px;color:#e4e4e4;left:706.27px;transform:scaleX(0.87);transform-origin:0 0;">105</span>
<span class="t" style="top:607.00px;font-size:7.60px;color:#e4e4e4;left:732.93px;transform:scaleX(0.87);transform-origin:0 0;">110</span>
<span class="t" style="top:607.00px;font-size:7.60px;color:#e4e4e4;left:759.60px;transform:scaleX(0.87);transform-origin:0 0;">115</span>
<span class="t" style="top:607.00px;font-size:7.60px;color:#e4e4e4;left:786.27px;transform:scaleX(0.87);transform-origin:0 0;">120</span>
<span class="t" style="top:607.00px;font-size:7.60px;color:#e4e4e4;left:812.93px;transform:scaleX(0.87);transform-origin:0 0;">125</span>
<span class="t" style="top:607.00px;font-size:7.60px;color:#e4e4e4;left:839.60px;transform:scaleX(0.87);transform-origin:0 0;">130</span>
<span class="t" style="top:607.00px;font-size:7.60px;color:#e4e4e4;left:866.27px;transform:scaleX(0.87);transform-origin:0 0;">135</span>
<span class="t" style="top:607.00px;font-size:7.60px;color:#e4e4e4;left:892.93px;transform:scaleX(0.87);transform-origin:0 0;">140</span>
<span class="t" style="top:607.00px;font-size:7.60px;color:#e4e4e4;left:919.60px;transform:scaleX(0.87);transform-origin:0 0;">145</span>
<span class="t" style="top:607.00px;font-size:7.60px;color:#e4e4e4;left:946.27px;transform:scaleX(0.87);transform-origin:0 0;">150</span>
<span class="t" style="top:607.00px;font-size:7.60px;color:#e4e4e4;left:972.93px;transform:scaleX(0.87);transform-origin:0 0;">155</span>
<span class="t" style="top:607.00px;font-size:7.60px;color:#e4e4e4;left:999.60px;transform:scaleX(0.87);transform-origin:0 0;">160</span>
<svg class="abs" style="left:152px;top:614px;overflow:visible;" width="865" height="3" viewBox="0 0 865 3"><g transform="translate(0.000 0.300)"><g fill="#b4b4b4"><rect x="3.90" y="0" width="0.6" height="1.6"/><rect x="9.23" y="0" width="0.6" height="1.6"/><rect x="14.57" y="0" width="0.6" height="1.6"/><rect x="19.90" y="0" width="0.6" height="1.6"/><rect x="25.23" y="0" width="0.6" height="1.6"/><rect x="30.57" y="0" width="0.6" height="1.6"/><rect x="35.90" y="0" width="0.6" height="1.6"/><rect x="41.23" y="0" width="0.6" height="1.6"/><rect x="46.57" y="0" width="0.6" height="1.6"/><rect x="51.90" y="0" width="0.6" height="1.6"/><rect x="57.23" y="0" width="0.6" height="1.6"/><rect x="62.57" y="0" width="0.6" height="1.6"/><rect x="67.90" y="0" width="0.6" height="1.6"/><rect x="73.23" y="0" width="0.6" height="1.6"/><rect x="78.57" y="0" width="0.6" height="1.6"/><rect x="83.90" y="0" width="0.6" height="1.6"/><rect x="89.23" y="0" width="0.6" height="1.6"/><rect x="94.57" y="0" width="0.6" height="1.6"/><rect x="99.90" y="0" width="0.6" height="1.6"/><rect x="105.23" y="0" width="0.6" height="1.6"/><rect x="110.57" y="0" width="0.6" height="1.6"/><rect x="115.90" y="0" width="0.6" height="1.6"/><rect x="121.23" y="0" width="0.6" height="1.6"/><rect x="126.57" y="0" width="0.6" height="1.6"/><rect x="131.90" y="0" width="0.6" height="1.6"/><rect x="137.23" y="0" width="0.6" height="1.6"/><rect x="142.57" y="0" width="0.6" height="1.6"/><rect x="147.90" y="0" width="0.6" height="1.6"/><rect x="153.23" y="0" width="0.6" height="1.6"/><rect x="158.57" y="0" width="0.6" height="1.6"/><rect x="163.90" y="0" width="0.6" height="1.6"/><rect x="169.23" y="0" width="0.6" height="1.6"/><rect x="174.57" y="0" width="0.6" height="1.6"/><rect x="179.90" y="0" width="0.6" height="1.6"/><rect x="185.23" y="0" width="0.6" height="1.6"/><rect x="190.57" y="0" width="0.6" height="1.6"/><rect x="195.90" y="0" width="0.6" height="1.6"/><rect x="201.23" y="0" width="0.6" height="1.6"/><rect x="206.57" y="0" width="0.6" height="1.6"/><rect x="211.90" y="0" width="0.6" height="1.6"/><rect x="217.23" y="0" width="0.6" height="1.6"/><rect x="222.57" y="0" width="0.6" height="1.6"/><rect x="227.90" y="0" width="0.6" height="1.6"/><rect x="233.23" y="0" width="0.6" height="1.6"/><rect x="238.57" y="0" width="0.6" height="1.6"/><rect x="243.90" y="0" width="0.6" height="1.6"/><rect x="249.23" y="0" width="0.6" height="1.6"/><rect x="254.57" y="0" width="0.6" height="1.6"/><rect x="259.90" y="0" width="0.6" height="1.6"/><rect x="265.23" y="0" width="0.6" height="1.6"/><rect x="270.57" y="0" width="0.6" height="1.6"/><rect x="275.90" y="0" width="0.6" height="1.6"/><rect x="281.23" y="0" width="0.6" height="1.6"/><rect x="286.57" y="0" width="0.6" height="1.6"/><rect x="291.90" y="0" width="0.6" height="1.6"/><rect x="297.23" y="0" width="0.6" height="1.6"/><rect x="302.57" y="0" width="0.6" height="1.6"/><rect x="307.90" y="0" width="0.6" height="1.6"/><rect x="313.23" y="0" width="0.6" height="1.6"/><rect x="318.57" y="0" width="0.6" height="1.6"/><rect x="323.90" y="0" width="0.6" height="1.6"/><rect x="329.23" y="0" width="0.6" height="1.6"/><rect x="334.57" y="0" width="0.6" height="1.6"/><rect x="339.90" y="0" width="0.6" height="1.6"/><rect x="345.23" y="0" width="0.6" height="1.6"/><rect x="350.57" y="0" width="0.6" height="1.6"/><rect x="355.90" y="0" width="0.6" height="1.6"/><rect x="361.23" y="0" width="0.6" height="1.6"/><rect x="366.57" y="0" width="0.6" height="1.6"/><rect x="371.90" y="0" width="0.6" height="1.6"/><rect x="377.23" y="0" width="0.6" height="1.6"/><rect x="382.57" y="0" width="0.6" height="1.6"/><rect x="387.90" y="0" width="0.6" height="1.6"/><rect x="393.23" y="0" width="0.6" height="1.6"/><rect x="398.57" y="0" width="0.6" height="1.6"/><rect x="403.90" y="0" width="0.6" height="1.6"/><rect x="409.23" y="0" width="0.6" height="1.6"/><rect x="414.57" y="0" width="0.6" height="1.6"/><rect x="419.90" y="0" width="0.6" height="1.6"/><rect x="425.23" y="0" width="0.6" height="1.6"/><rect x="430.57" y="0" width="0.6" height="1.6"/><rect x="435.90" y="0" width="0.6" height="1.6"/><rect x="441.23" y="0" width="0.6" height="1.6"/><rect x="446.57" y="0" width="0.6" height="1.6"/><rect x="451.90" y="0" width="0.6" height="1.6"/><rect x="457.23" y="0" width="0.6" height="1.6"/><rect x="462.57" y="0" width="0.6" height="1.6"/><rect x="467.90" y="0" width="0.6" height="1.6"/><rect x="473.23" y="0" width="0.6" height="1.6"/><rect x="478.57" y="0" width="0.6" height="1.6"/><rect x="483.90" y="0" width="0.6" height="1.6"/><rect x="489.23" y="0" width="0.6" height="1.6"/><rect x="494.57" y="0" width="0.6" height="1.6"/><rect x="499.90" y="0" width="0.6" height="1.6"/><rect x="505.23" y="0" width="0.6" height="1.6"/><rect x="510.57" y="0" width="0.6" height="1.6"/><rect x="515.90" y="0" width="0.6" height="1.6"/><rect x="521.23" y="0" width="0.6" height="1.6"/><rect x="526.57" y="0" width="0.6" height="1.6"/><rect x="531.90" y="0" width="0.6" height="1.6"/><rect x="537.23" y="0" width="0.6" height="1.6"/><rect x="542.57" y="0" width="0.6" height="1.6"/><rect x="547.90" y="0" width="0.6" height="1.6"/><rect x="553.23" y="0" width="0.6" height="1.6"/><rect x="558.57" y="0" width="0.6" height="1.6"/><rect x="563.90" y="0" width="0.6" height="1.6"/><rect x="569.23" y="0" width="0.6" height="1.6"/><rect x="574.57" y="0" width="0.6" height="1.6"/><rect x="579.90" y="0" width="0.6" height="1.6"/><rect x="585.23" y="0" width="0.6" height="1.6"/><rect x="590.57" y="0" width="0.6" height="1.6"/><rect x="595.90" y="0" width="0.6" height="1.6"/><rect x="601.23" y="0" width="0.6" height="1.6"/><rect x="606.57" y="0" width="0.6" height="1.6"/><rect x="611.90" y="0" width="0.6" height="1.6"/><rect x="617.23" y="0" width="0.6" height="1.6"/><rect x="622.57" y="0" width="0.6" height="1.6"/><rect x="627.90" y="0" width="0.6" height="1.6"/><rect x="633.23" y="0" width="0.6" height="1.6"/><rect x="638.57" y="0" width="0.6" height="1.6"/><rect x="643.90" y="0" width="0.6" height="1.6"/><rect x="649.23" y="0" width="0.6" height="1.6"/><rect x="654.57" y="0" width="0.6" height="1.6"/><rect x="659.90" y="0" width="0.6" height="1.6"/><rect x="665.23" y="0" width="0.6" height="1.6"/><rect x="670.57" y="0" width="0.6" height="1.6"/><rect x="675.90" y="0" width="0.6" height="1.6"/><rect x="681.23" y="0" width="0.6" height="1.6"/><rect x="686.57" y="0" width="0.6" height="1.6"/><rect x="691.90" y="0" width="0.6" height="1.6"/><rect x="697.23" y="0" width="0.6" height="1.6"/><rect x="702.57" y="0" width="0.6" height="1.6"/><rect x="707.90" y="0" width="0.6" height="1.6"/><rect x="713.23" y="0" width="0.6" height="1.6"/><rect x="718.57" y="0" width="0.6" height="1.6"/><rect x="723.90" y="0" width="0.6" height="1.6"/><rect x="729.23" y="0" width="0.6" height="1.6"/><rect x="734.57" y="0" width="0.6" height="1.6"/><rect x="739.90" y="0" width="0.6" height="1.6"/><rect x="745.23" y="0" width="0.6" height="1.6"/><rect x="750.57" y="0" width="0.6" height="1.6"/><rect x="755.90" y="0" width="0.6" height="1.6"/><rect x="761.23" y="0" width="0.6" height="1.6"/><rect x="766.57" y="0" width="0.6" height="1.6"/><rect x="771.90" y="0" width="0.6" height="1.6"/><rect x="777.23" y="0" width="0.6" height="1.6"/><rect x="782.57" y="0" width="0.6" height="1.6"/><rect x="787.90" y="0" width="0.6" height="1.6"/><rect x="793.23" y="0" width="0.6" height="1.6"/><rect x="798.57" y="0" width="0.6" height="1.6"/><rect x="803.90" y="0" width="0.6" height="1.6"/><rect x="809.23" y="0" width="0.6" height="1.6"/><rect x="814.57" y="0" width="0.6" height="1.6"/><rect x="819.90" y="0" width="0.6" height="1.6"/><rect x="825.23" y="0" width="0.6" height="1.6"/><rect x="830.57" y="0" width="0.6" height="1.6"/><rect x="835.90" y="0" width="0.6" height="1.6"/><rect x="841.23" y="0" width="0.6" height="1.6"/><rect x="846.57" y="0" width="0.6" height="1.6"/><rect x="851.90" y="0" width="0.6" height="1.6"/><rect x="857.23" y="0" width="0.6" height="1.6"/><rect x="862.57" y="0" width="0.6" height="1.6"/></g></g></svg>
<div class="abs" style="left:152.00px;top:616.30px;width:864.00px;height:0.80px;background:#3f3f3f;"></div>
<div class="abs" style="left:0.00px;top:616.50px;width:150.20px;height:11.70px;background:#4f4f4f;"></div>
<div class="abs" style="left:0.00px;top:627.50px;width:150.20px;height:0.80px;background:#5e5e5e;"></div>
<span class="t" style="top:620.00px;font-size:8.00px;color:#d6d6d6;left:28.80px;transform:scaleX(0.93);transform-origin:0 0;">Инструкции</span>
<div class="abs" style="left:116.00px;top:618.70px;width:3.70px;height:7.80px;background:#4f7dff;border-radius:0.8px;"></div>
<svg class="abs" style="left:128px;top:610px;overflow:visible;" width="21" height="61" viewBox="0 0 21 61"><g transform="translate(0.000 0.000)"><circle cx="3.5" cy="12.9" r="1.35" fill="#0c0c0c"/><circle cx="16.4" cy="12.9" r="1.35" fill="#0c0c0c"/></g></svg>
<svg class="abs" style="left:17px;top:617px;overflow:visible;" width="10" height="10" viewBox="0 0 10 10"><g transform="translate(0.000 0.950)"><path d="M0.6 2.6L3.6 0.6L6 1.4L4.6 1.8L8.6 7.6L7.6 8.4L3.4 2.8L2.2 4z" fill="#e4e4e4"/></g></svg>
<div class="abs" style="left:0.00px;top:628.20px;width:150.20px;height:12.10px;background:#4f4f4f;"></div>
<div class="abs" style="left:0.00px;top:639.60px;width:150.20px;height:0.80px;background:#5e5e5e;"></div>
<span class="t" style="top:632.00px;font-size:8.00px;color:#d6d6d6;left:28.80px;transform:scaleX(0.93);transform-origin:0 0;">Действия</span>
<div class="abs" style="left:116.00px;top:630.40px;width:3.70px;height:7.80px;background:#9c33d6;border-radius:0.8px;"></div>
<svg class="abs" style="left:128px;top:610px;overflow:visible;" width="21" height="61" viewBox="0 0 21 61"><g transform="translate(0.000 0.000)"><circle cx="3.5" cy="25.0" r="1.35" fill="#0c0c0c"/><circle cx="16.4" cy="25.0" r="1.35" fill="#0c0c0c"/></g></svg>
<svg class="abs" style="left:16px;top:630px;overflow:visible;" width="10" height="9" viewBox="0 0 10 9"><g transform="translate(0.900 0.250)"><path d="M0.5 0.5H8.2V7.3H3L0.5 4.9z" fill="none" stroke="#e4e4e4" stroke-width="0.9"/><path d="M0.5 4.9H3V7.3" fill="none" stroke="#e4e4e4" stroke-width="0.8"/></g></svg>
<div class="abs" style="left:0.00px;top:640.30px;width:150.20px;height:12.00px;background:#4f4f4f;"></div>
<div class="abs" style="left:0.00px;top:651.60px;width:150.20px;height:0.80px;background:#5e5e5e;"></div>
<span class="t" style="top:644.00px;font-size:8.00px;color:#d6d6d6;left:28.80px;transform:scaleX(0.93);transform-origin:0 0;">Графика снега</span>
<div class="abs" style="left:116.00px;top:642.50px;width:3.70px;height:7.80px;background:#4bff55;border-radius:0.8px;"></div>
<svg class="abs" style="left:128px;top:610px;overflow:visible;" width="21" height="61" viewBox="0 0 21 61"><g transform="translate(0.000 0.000)"><circle cx="3.5" cy="37.1" r="1.35" fill="#0c0c0c"/><circle cx="16.4" cy="37.1" r="1.35" fill="#0c0c0c"/></g></svg>
<svg class="abs" style="left:16px;top:642px;overflow:visible;" width="10" height="9" viewBox="0 0 10 9"><g transform="translate(0.900 0.300)"><path d="M0.5 0.5H8.2V7.3H3L0.5 4.9z" fill="none" stroke="#e4e4e4" stroke-width="0.9"/><path d="M0.5 4.9H3V7.3" fill="none" stroke="#e4e4e4" stroke-width="0.8"/></g></svg>
<div class="abs" style="left:0.00px;top:652.30px;width:150.20px;height:12.50px;background:#3668ad;"></div>
<span class="t" style="top:656.00px;font-size:8.00px;color:#ffffff;left:28.80px;transform:scaleX(0.93);transform-origin:0 0;">Фон</span>
<div class="abs" style="left:116.00px;top:654.50px;width:3.70px;height:7.80px;background:#ff4f55;border-radius:0.8px;"></div>
<svg class="abs" style="left:128px;top:610px;overflow:visible;" width="21" height="61" viewBox="0 0 21 61"><g transform="translate(0.000 0.000)"><circle cx="3.5" cy="49.0" r="1.35" fill="#ffffff"/><circle cx="16.4" cy="49.0" r="1.35" fill="#ffffff"/></g></svg>
<svg class="abs" style="left:16px;top:654px;overflow:visible;" width="10" height="9" viewBox="0 0 10 9"><g transform="translate(0.900 0.550)"><path d="M0.5 0.5H8.2V7.3H3L0.5 4.9z" fill="none" stroke="#e4e4e4" stroke-width="0.9"/><path d="M0.5 4.9H3V7.3" fill="none" stroke="#e4e4e4" stroke-width="0.8"/></g></svg>
<svg class="abs" style="left:152px;top:616px;overflow:visible;" width="865" height="50" viewBox="0 0 865 50"><g transform="translate(0.000 0.900)"><rect width="864" height="48.6" fill="#666666"/><rect x="0.50" y="0" width="4.33" height="48.3" fill="#585858"/><rect x="5.83" y="0" width="4.33" height="48.3" fill="#585858"/><rect x="11.17" y="0" width="4.33" height="48.3" fill="#585858"/><rect x="16.50" y="0" width="4.33" height="48.3" fill="#585858"/><rect x="21.83" y="0" width="4.33" height="48.3" fill="#4b4b4b"/><rect x="27.17" y="0" width="4.33" height="48.3" fill="#585858"/><rect x="32.50" y="0" width="4.33" height="48.3" fill="#585858"/><rect x="37.83" y="0" width="4.33" height="48.3" fill="#585858"/><rect x="43.17" y="0" width="4.33" height="48.3" fill="#585858"/><rect x="48.50" y="0" width="4.33" height="48.3" fill="#4b4b4b"/><rect x="53.83" y="0" width="4.33" height="48.3" fill="#585858"/><rect x="59.17" y="0" width="4.33" height="48.3" fill="#585858"/><rect x="64.50" y="0" width="4.33" height="48.3" fill="#585858"/><rect x="69.83" y="0" width="4.33" height="48.3" fill="#585858"/><rect x="75.17" y="0" width="4.33" height="48.3" fill="#4b4b4b"/><rect x="80.50" y="0" width="4.33" height="48.3" fill="#585858"/><rect x="85.83" y="0" width="4.33" height="48.3" fill="#585858"/><rect x="91.17" y="0" width="4.33" height="48.3" fill="#585858"/><rect x="96.50" y="0" width="4.33" height="48.3" fill="#585858"/><rect x="101.83" y="0" width="4.33" height="48.3" fill="#4b4b4b"/><rect x="107.17" y="0" width="4.33" height="48.3" fill="#585858"/><rect x="112.50" y="0" width="4.33" height="48.3" fill="#585858"/><rect x="117.83" y="0" width="4.33" height="48.3" fill="#585858"/><rect x="123.17" y="0" width="4.33" height="48.3" fill="#585858"/><rect x="128.50" y="0" width="4.33" height="48.3" fill="#4b4b4b"/><rect x="133.83" y="0" width="4.33" height="48.3" fill="#585858"/><rect x="139.17" y="0" width="4.33" height="48.3" fill="#585858"/><rect x="144.50" y="0" width="4.33" height="48.3" fill="#585858"/><rect x="149.83" y="0" width="4.33" height="48.3" fill="#585858"/><rect x="155.17" y="0" width="4.33" height="48.3" fill="#4b4b4b"/><rect x="160.50" y="0" width="4.33" height="48.3" fill="#585858"/><rect x="165.83" y="0" width="4.33" height="48.3" fill="#585858"/><rect x="171.17" y="0" width="4.33" height="48.3" fill="#585858"/><rect x="176.50" y="0" width="4.33" height="48.3" fill="#585858"/><rect x="181.83" y="0" width="4.33" height="48.3" fill="#4b4b4b"/><rect x="187.17" y="0" width="4.33" height="48.3" fill="#585858"/><rect x="192.50" y="0" width="4.33" height="48.3" fill="#585858"/><rect x="197.83" y="0" width="4.33" height="48.3" fill="#585858"/><rect x="203.17" y="0" width="4.33" height="48.3" fill="#585858"/><rect x="208.50" y="0" width="4.33" height="48.3" fill="#4b4b4b"/><rect x="213.83" y="0" width="4.33" height="48.3" fill="#585858"/><rect x="219.17" y="0" width="4.33" height="48.3" fill="#585858"/><rect x="224.50" y="0" width="4.33" height="48.3" fill="#585858"/><rect x="229.83" y="0" width="4.33" height="48.3" fill="#585858"/><rect x="235.17" y="0" width="4.33" height="48.3" fill="#4b4b4b"/><rect x="240.50" y="0" width="4.33" height="48.3" fill="#585858"/><rect x="245.83" y="0" width="4.33" height="48.3" fill="#585858"/><rect x="251.17" y="0" width="4.33" height="48.3" fill="#585858"/><rect x="256.50" y="0" width="4.33" height="48.3" fill="#585858"/><rect x="261.83" y="0" width="4.33" height="48.3" fill="#4b4b4b"/><rect x="267.17" y="0" width="4.33" height="48.3" fill="#585858"/><rect x="272.50" y="0" width="4.33" height="48.3" fill="#585858"/><rect x="277.83" y="0" width="4.33" height="48.3" fill="#585858"/><rect x="283.17" y="0" width="4.33" height="48.3" fill="#585858"/><rect x="288.50" y="0" width="4.33" height="48.3" fill="#4b4b4b"/><rect x="293.83" y="0" width="4.33" height="48.3" fill="#585858"/><rect x="299.17" y="0" width="4.33" height="48.3" fill="#585858"/><rect x="304.50" y="0" width="4.33" height="48.3" fill="#585858"/><rect x="309.83" y="0" width="4.33" height="48.3" fill="#585858"/><rect x="315.17" y="0" width="4.33" height="48.3" fill="#4b4b4b"/><rect x="320.50" y="0" width="4.33" height="48.3" fill="#585858"/><rect x="325.83" y="0" width="4.33" height="48.3" fill="#585858"/><rect x="331.17" y="0" width="4.33" height="48.3" fill="#585858"/><rect x="336.50" y="0" width="4.33" height="48.3" fill="#585858"/><rect x="341.83" y="0" width="4.33" height="48.3" fill="#4b4b4b"/><rect x="347.17" y="0" width="4.33" height="48.3" fill="#585858"/><rect x="352.50" y="0" width="4.33" height="48.3" fill="#585858"/><rect x="357.83" y="0" width="4.33" height="48.3" fill="#585858"/><rect x="363.17" y="0" width="4.33" height="48.3" fill="#585858"/><rect x="368.50" y="0" width="4.33" height="48.3" fill="#4b4b4b"/><rect x="373.83" y="0" width="4.33" height="48.3" fill="#585858"/><rect x="379.17" y="0" width="4.33" height="48.3" fill="#585858"/><rect x="384.50" y="0" width="4.33" height="48.3" fill="#585858"/><rect x="389.83" y="0" width="4.33" height="48.3" fill="#585858"/><rect x="395.17" y="0" width="4.33" height="48.3" fill="#4b4b4b"/><rect x="400.50" y="0" width="4.33" height="48.3" fill="#585858"/><rect x="405.83" y="0" width="4.33" height="48.3" fill="#585858"/><rect x="411.17" y="0" width="4.33" height="48.3" fill="#585858"/><rect x="416.50" y="0" width="4.33" height="48.3" fill="#585858"/><rect x="421.83" y="0" width="4.33" height="48.3" fill="#4b4b4b"/><rect x="427.17" y="0" width="4.33" height="48.3" fill="#585858"/><rect x="432.50" y="0" width="4.33" height="48.3" fill="#585858"/><rect x="437.83" y="0" width="4.33" height="48.3" fill="#585858"/><rect x="443.17" y="0" width="4.33" height="48.3" fill="#585858"/><rect x="448.50" y="0" width="4.33" height="48.3" fill="#4b4b4b"/><rect x="453.83" y="0" width="4.33" height="48.3" fill="#585858"/><rect x="459.17" y="0" width="4.33" height="48.3" fill="#585858"/><rect x="464.50" y="0" width="4.33" height="48.3" fill="#585858"/><rect x="469.83" y="0" width="4.33" height="48.3" fill="#585858"/><rect x="475.17" y="0" width="4.33" height="48.3" fill="#4b4b4b"/><rect x="480.50" y="0" width="4.33" height="48.3" fill="#585858"/><rect x="485.83" y="0" width="4.33" height="48.3" fill="#585858"/><rect x="491.17" y="0" width="4.33" height="48.3" fill="#585858"/><rect x="496.50" y="0" width="4.33" height="48.3" fill="#585858"/><rect x="501.83" y="0" width="4.33" height="48.3" fill="#4b4b4b"/><rect x="507.17" y="0" width="4.33" height="48.3" fill="#585858"/><rect x="512.50" y="0" width="4.33" height="48.3" fill="#585858"/><rect x="517.83" y="0" width="4.33" height="48.3" fill="#585858"/><rect x="523.17" y="0" width="4.33" height="48.3" fill="#585858"/><rect x="528.50" y="0" width="4.33" height="48.3" fill="#4b4b4b"/><rect x="533.83" y="0" width="4.33" height="48.3" fill="#585858"/><rect x="539.17" y="0" width="4.33" height="48.3" fill="#585858"/><rect x="544.50" y="0" width="4.33" height="48.3" fill="#585858"/><rect x="549.83" y="0" width="4.33" height="48.3" fill="#585858"/><rect x="555.17" y="0" width="4.33" height="48.3" fill="#4b4b4b"/><rect x="560.50" y="0" width="4.33" height="48.3" fill="#585858"/><rect x="565.83" y="0" width="4.33" height="48.3" fill="#585858"/><rect x="571.17" y="0" width="4.33" height="48.3" fill="#585858"/><rect x="576.50" y="0" width="4.33" height="48.3" fill="#585858"/><rect x="581.83" y="0" width="4.33" height="48.3" fill="#4b4b4b"/><rect x="587.17" y="0" width="4.33" height="48.3" fill="#585858"/><rect x="592.50" y="0" width="4.33" height="48.3" fill="#585858"/><rect x="597.83" y="0" width="4.33" height="48.3" fill="#585858"/><rect x="603.17" y="0" width="4.33" height="48.3" fill="#585858"/><rect x="608.50" y="0" width="4.33" height="48.3" fill="#4b4b4b"/><rect x="613.83" y="0" width="4.33" height="48.3" fill="#585858"/><rect x="619.17" y="0" width="4.33" height="48.3" fill="#585858"/><rect x="624.50" y="0" width="4.33" height="48.3" fill="#585858"/><rect x="629.83" y="0" width="4.33" height="48.3" fill="#585858"/><rect x="635.17" y="0" width="4.33" height="48.3" fill="#4b4b4b"/><rect x="640.50" y="0" width="4.33" height="48.3" fill="#585858"/><rect x="645.83" y="0" width="4.33" height="48.3" fill="#585858"/><rect x="651.17" y="0" width="4.33" height="48.3" fill="#585858"/><rect x="656.50" y="0" width="4.33" height="48.3" fill="#585858"/><rect x="661.83" y="0" width="4.33" height="48.3" fill="#4b4b4b"/><rect x="667.17" y="0" width="4.33" height="48.3" fill="#585858"/><rect x="672.50" y="0" width="4.33" height="48.3" fill="#585858"/><rect x="677.83" y="0" width="4.33" height="48.3" fill="#585858"/><rect x="683.17" y="0" width="4.33" height="48.3" fill="#585858"/><rect x="688.50" y="0" width="4.33" height="48.3" fill="#4b4b4b"/><rect x="693.83" y="0" width="4.33" height="48.3" fill="#585858"/><rect x="699.17" y="0" width="4.33" height="48.3" fill="#585858"/><rect x="704.50" y="0" width="4.33" height="48.3" fill="#585858"/><rect x="709.83" y="0" width="4.33" height="48.3" fill="#585858"/><rect x="715.17" y="0" width="4.33" height="48.3" fill="#4b4b4b"/><rect x="720.50" y="0" width="4.33" height="48.3" fill="#585858"/><rect x="725.83" y="0" width="4.33" height="48.3" fill="#585858"/><rect x="731.17" y="0" width="4.33" height="48.3" fill="#585858"/><rect x="736.50" y="0" width="4.33" height="48.3" fill="#585858"/><rect x="741.83" y="0" width="4.33" height="48.3" fill="#4b4b4b"/><rect x="747.17" y="0" width="4.33" height="48.3" fill="#585858"/><rect x="752.50" y="0" width="4.33" height="48.3" fill="#585858"/><rect x="757.83" y="0" width="4.33" height="48.3" fill="#585858"/><rect x="763.17" y="0" width="4.33" height="48.3" fill="#585858"/><rect x="768.50" y="0" width="4.33" height="48.3" fill="#4b4b4b"/><rect x="773.83" y="0" width="4.33" height="48.3" fill="#585858"/><rect x="779.17" y="0" width="4.33" height="48.3" fill="#585858"/><rect x="784.50" y="0" width="4.33" height="48.3" fill="#585858"/><rect x="789.83" y="0" width="4.33" height="48.3" fill="#585858"/><rect x="795.17" y="0" width="4.33" height="48.3" fill="#4b4b4b"/><rect x="800.50" y="0" width="4.33" height="48.3" fill="#585858"/><rect x="805.83" y="0" width="4.33" height="48.3" fill="#585858"/><rect x="811.17" y="0" width="4.33" height="48.3" fill="#585858"/><rect x="816.50" y="0" width="4.33" height="48.3" fill="#585858"/><rect x="821.83" y="0" width="4.33" height="48.3" fill="#4b4b4b"/><rect x="827.17" y="0" width="4.33" height="48.3" fill="#585858"/><rect x="832.50" y="0" width="4.33" height="48.3" fill="#585858"/><rect x="837.83" y="0" width="4.33" height="48.3" fill="#585858"/><rect x="843.17" y="0" width="4.33" height="48.3" fill="#585858"/><rect x="848.50" y="0" width="4.33" height="48.3" fill="#4b4b4b"/><rect x="853.83" y="0" width="4.33" height="48.3" fill="#585858"/><rect x="859.17" y="0" width="4.33" height="48.3" fill="#585858"/><rect x="0" y="11.50" width="864" height="0.9" fill="#666666"/><rect x="0" y="23.60" width="864" height="0.9" fill="#666666"/><rect x="0" y="35.60" width="864" height="0.9" fill="#666666"/><rect x="0" y="48.10" width="864" height="0.9" fill="#666666"/></g></svg>
<div class="abs" style="left:152.00px;top:616.50px;width:4.20px;height:67.20px;background:rgba(200,120,120,0.28);"></div>
<div class="abs" style="left:153.40px;top:616.50px;width:0.90px;height:67.20px;background:#8e2e33;"></div>
<div class="abs" style="left:152.30px;top:617.10px;width:4.40px;height:10.90px;background:#80625f;"></div>
<div class="abs" style="left:152.60px;top:623.30px;width:3.00px;height:3.00px;background:#0a0a0a;border-radius:50%;"></div>
<div class="abs" style="left:152.30px;top:628.80px;width:4.40px;height:11.30px;background:#80625f;"></div>
<div class="abs" style="left:153.20px;top:629.60px;width:2.60px;height:3.00px;background:#e8e8e8;opacity:.85;"></div>
<div class="abs" style="left:152.9px;top:635.70px;width:3.2px;height:3.2px;border-radius:50%;border:0.9px solid #141414"></div>
<div class="abs" style="left:152.30px;top:640.90px;width:4.40px;height:11.20px;background:#80625f;"></div>
<div class="abs" style="left:152.60px;top:647.40px;width:3.00px;height:3.00px;background:#0a0a0a;border-radius:50%;"></div>
<div class="abs" style="left:152.30px;top:652.90px;width:4.40px;height:11.70px;background:#80625f;"></div>
<div class="abs" style="left:152.60px;top:659.90px;width:3.00px;height:3.00px;background:#0a0a0a;border-radius:50%;"></div>
<div class="abs" style="left:150.00px;top:595.60px;width:8.20px;height:20.80px;background:#a52f37;border-radius:1px;"></div>
<span class="t" style="top:607.00px;font-size:7.60px;color:#ffffff;font-weight:bold;left:151.80px;transform:scaleX(1);transform-origin:0 0;">1</span>
<div class="abs" style="left:0.00px;top:683.30px;width:150.20px;height:7.90px;background:#5a5a5a;"></div>
<div class="abs" style="left:152.00px;top:683.50px;width:864.00px;height:7.70px;background:#4e4e4e;"></div>
<div class="abs" style="left:150.20px;top:683.50px;width:1.90px;height:9.50px;background:#2c2c2c;"></div>
<div class="abs" style="left:152.50px;top:684.60px;width:209.40px;height:6.20px;background:#686868;border-radius:3px;"></div>
<div class="abs" style="left:0.00px;top:691.00px;width:1024.00px;height:2.00px;background:#3a3a3a;"></div>
<div class="abs" style="left:1016.00px;top:595.00px;width:8.00px;height:88.50px;background:#535353;"></div>
<div class="abs" style="left:1024.00px;top:20.00px;width:256.00px;height:673.00px;background:#3d3d3d;"></div>
<svg class="abs" style="left:1042px;top:22px;overflow:visible;" width="6" height="5" viewBox="0 0 6 5"><g transform="translate(0.000 0.400)"><path d="M2 0.3L0.3 2.2L2 4.1zM4.6 0.3L2.9 2.2L4.6 4.1z" fill="#c8c8c8"/></g></svg>
<svg class="abs" style="left:1244px;top:22px;overflow:visible;" width="6" height="5" viewBox="0 0 6 5"><g transform="translate(0.000 0.400)"><path d="M0.3 0.3L2 2.2L0.3 4.1zM2.9 0.3L4.6 2.2L2.9 4.1z" fill="#c8c8c8"/></g></svg>
<svg class="abs" style="left:1270px;top:22px;overflow:visible;" width="6" height="5" viewBox="0 0 6 5"><g transform="translate(0.600 0.400)"><path d="M0.3 0.3L2 2.2L0.3 4.1zM2.9 0.3L4.6 2.2L2.9 4.1z" fill="#c8c8c8"/></g></svg>
<div class="abs" style="left:1025.80px;top:28.70px;width:25.60px;height:664.30px;background:#535353;"></div>
<div class="abs" style="left:1025.80px;top:73.70px;width:25.60px;height:1.30px;background:#3d3d3d;"></div>
<div class="abs" style="left:1025.80px;top:138.20px;width:25.60px;height:1.30px;background:#3d3d3d;"></div>
<div class="abs" style="left:1025.80px;top:166.00px;width:25.60px;height:1.30px;background:#3d3d3d;"></div>
<div class="abs" style="left:1025.80px;top:193.00px;width:25.60px;height:1.30px;background:#3d3d3d;"></div>
<svg class="abs" style="left:1032px;top:31px;overflow:visible;" width="13" height="3" viewBox="0 0 13 3"><g transform="translate(0.500 0.400)"><rect x="0.0" y="0" width="1.3" height="1.6" fill="#444"/><rect x="2.6" y="0" width="1.3" height="1.6" fill="#444"/><rect x="5.2" y="0" width="1.3" height="1.6" fill="#444"/><rect x="7.8" y="0" width="1.3" height="1.6" fill="#444"/><rect x="10.4" y="0" width="1.3" height="1.6" fill="#444"/></g></svg>
<svg class="abs" style="left:1032px;top:77px;overflow:visible;" width="13" height="3" viewBox="0 0 13 3"><g transform="translate(0.500 0.000)"><rect x="0.0" y="0" width="1.3" height="1.6" fill="#444"/><rect x="2.6" y="0" width="1.3" height="1.6" fill="#444"/><rect x="5.2" y="0" width="1.3" height="1.6" fill="#444"/><rect x="7.8" y="0" width="1.3" height="1.6" fill="#444"/><rect x="10.4" y="0" width="1.3" height="1.6" fill="#444"/></g></svg>
<svg class="abs" style="left:1032px;top:141px;overflow:visible;" width="13" height="3" viewBox="0 0 13 3"><g transform="translate(0.500 0.300)"><rect x="0.0" y="0" width="1.3" height="1.6" fill="#444"/><rect x="2.6" y="0" width="1.3" height="1.6" fill="#444"/><rect x="5.2" y="0" width="1.3" height="1.6" fill="#444"/><rect x="7.8" y="0" width="1.3" height="1.6" fill="#444"/><rect x="10.4" y="0" width="1.3" height="1.6" fill="#444"/></g></svg>
<svg class="abs" style="left:1032px;top:169px;overflow:visible;" width="13" height="3" viewBox="0 0 13 3"><g transform="translate(0.500 0.200)"><rect x="0.0" y="0" width="1.3" height="1.6" fill="#444"/><rect x="2.6" y="0" width="1.3" height="1.6" fill="#444"/><rect x="5.2" y="0" width="1.3" height="1.6" fill="#444"/><rect x="7.8" y="0" width="1.3" height="1.6" fill="#444"/><rect x="10.4" y="0" width="1.3" height="1.6" fill="#444"/></g></svg>
<svg class="abs" style="left:1032px;top:39px;overflow:visible;" width="15" height="11" viewBox="0 0 15 11"><g transform="translate(0.400 0.000)"><path d="M5.2 3.5C5.9 2.5 5.5 1.2 7 0.6C10 -0.3 13.4 1.8 13.4 5C13.4 8.1 10.4 10 7 10C3.2 10 0.4 8.5 0.4 6.3C0.4 4.5 2.2 3.7 3.6 3.9C4.4 4 4.8 4 5.2 3.5z" fill="#d2d2d2"/><circle cx="3" cy="6.3" r="1.05" fill="#4a4a4a"/><circle cx="5.9" cy="7.6" r="1.05" fill="#4a4a4a"/><circle cx="8.8" cy="7.3" r="1" fill="#4a4a4a"/><circle cx="10.8" cy="5.6" r="0.95" fill="#4a4a4a"/><circle cx="10" cy="3.4" r="0.9" fill="#4a4a4a"/></g></svg>
<svg class="abs" style="left:1033px;top:58px;overflow:visible;" width="12" height="10" viewBox="0 0 12 10"><g transform="translate(0.000 0.700)"><rect width="11.2" height="8.4" fill="#bdbdbd"/><rect x="0.7" y="0.8" width="9.8" height="6.8" fill="#cacaca"/><rect x="0.9" y="1.0" width="3" height="3" fill="#9c9c9c"/><rect x="4.3" y="1.0" width="3" height="3" fill="#c6c6c6"/><rect x="7.7" y="1.0" width="3" height="3" fill="#6e6e6e"/><rect x="0.9" y="4.4" width="3" height="3" fill="#858585"/><rect x="4.3" y="4.4" width="3" height="3" fill="#8e8e8e"/><rect x="7.7" y="4.4" width="3" height="3" fill="#bebebe"/></g></svg>
<svg class="abs" style="left:1033px;top:84px;overflow:visible;" width="12" height="13" viewBox="0 0 12 13"><g transform="translate(0.800 0.200)"><rect x="0" y="0" width="1" height="11.8" fill="#d2d2d2"/><rect x="1.4" y="1.8" width="5.8" height="3.7" fill="#d2d2d2"/><rect x="1.4" y="6.7" width="8.8" height="3.7" fill="#d2d2d2"/></g></svg>
<svg class="abs" style="left:1033px;top:103px;overflow:visible;" width="12" height="12" viewBox="0 0 12 12"><g transform="translate(0.200 0.400)"><circle cx="5.6" cy="5.6" r="5.5" fill="#d2d2d2"/><rect x="4.9" y="2" width="1.7" height="1.7" fill="#4a4a4a"/><path d="M4.2 4.6h2.4v3.6h0.8v1H4.2v-1h0.8V5.6H4.2z" fill="#4a4a4a"/></g></svg>
<svg class="abs" style="left:1033px;top:122px;overflow:visible;" width="12" height="11" viewBox="0 0 12 11"><g transform="translate(0.700 0.500)"><rect x="1.1" y="1.1" width="8.2" height="8.2" fill="none" stroke="#9a9a9a" stroke-width="0.8"/><rect x="0.0" y="0.0" width="2.2" height="2.2" fill="#e0e0e0"/><rect x="4.1" y="0.0" width="2.2" height="2.2" fill="#e0e0e0"/><rect x="8.2" y="0.0" width="2.2" height="2.2" fill="#e0e0e0"/><rect x="0.0" y="4.1" width="2.2" height="2.2" fill="#e0e0e0"/><rect x="8.2" y="4.1" width="2.2" height="2.2" fill="#e0e0e0"/><rect x="0.0" y="8.2" width="2.2" height="2.2" fill="#e0e0e0"/><rect x="4.1" y="8.2" width="2.2" height="2.2" fill="#e0e0e0"/><rect x="8.2" y="8.2" width="2.2" height="2.2" fill="#e0e0e0"/><rect x="4.3" y="4.5" width="1.8" height="1.2" fill="#d2d2d2"/></g></svg>
<svg class="abs" style="left:1031px;top:146px;overflow:visible;" width="17" height="17" viewBox="0 0 17 17"><g transform="translate(0.000 0.000)"><circle cx="11.3" cy="3.8" r="1.5" fill="#d2d2d2"/><circle cx="9.8" cy="8.8" r="2.2" fill="#d2d2d2"/><circle cx="4.3" cy="12.3" r="2.8" fill="#d2d2d2"/></g></svg>
<svg class="abs" style="left:1031px;top:177px;overflow:visible;" width="16" height="11" viewBox="0 0 16 11"><g transform="translate(0.800 0.000)"><path d="M3.6 10C1.6 10 0.5 8.6 0.5 7.2C0.5 5.8 1.4 4.8 2.6 4.5C2.8 2.2 4.6 0.6 6.8 0.6C8.6 0.6 10 1.6 10.6 3.1C12.6 3.2 14.1 4.6 14.1 6.6C14.1 8.6 12.6 10 10.8 10z" fill="none" stroke="#d2d2d2" stroke-width="1.25"/><path d="M4.4 7.8C3.2 7.8 2.6 7 2.6 6.2C2.6 5.2 3.4 4.5 4.4 4.5C5.4 4.5 6 5.2 7 6.2C8 7.2 8.8 7.8 10 7.8C11.2 7.8 12 7 12 6C12 5 11.2 4.3 10.2 4.3C9.2 4.3 8.6 4.8 8 5.4M5.4 3.6C6 2.8 7 2.5 7.8 2.8" fill="none" stroke="#d2d2d2" stroke-width="1.15"/></g></svg>
<div class="abs" style="left:1053.00px;top:28.70px;width:200.40px;height:664.30px;background:#535353;"></div>
<div class="abs" style="left:1053.00px;top:28.70px;width:200.40px;height:11.00px;background:#424242;"></div>
<div class="abs" style="left:1053.00px;top:28.70px;width:40.00px;height:11.00px;background:#535353;"></div>
<span class="t" style="top:31.00px;font-size:7.30px;color:#f4f4f4;font-weight:bold;left:1057.40px;transform:scaleX(0.89);transform-origin:0 0;">Свойства</span>
<div class="abs" style="left:1093.40px;top:28.70px;width:47.60px;height:11.00px;background:#4a4a4a;"></div>
<span class="t" style="top:31.00px;font-size:7.30px;color:#a6a6a6;font-weight:bold;left:1097.60px;transform:scaleX(0.875);transform-origin:0 0;">Библиотека</span>
<svg class="abs" style="left:1242px;top:32px;overflow:visible;" width="8" height="6" viewBox="0 0 8 6"><g transform="translate(0.000 0.000)"><rect width="7" height="5.2" fill="#7c7c7c"/><rect width="7" height="1.7" fill="#b8b8b8"/><rect y="3.5" width="7" height="1.7" fill="#b8b8b8"/></g></svg>
<span class="t" style="top:49.00px;font-size:8.00px;color:#d0d0d0;left:1101.20px;transform:scaleX(0.93);transform-origin:0 0;">Документ</span>
<div class="abs" style="left:1071.80px;top:56.40px;width:11.00px;height:9.60px;border:1px solid #e0e0e0;"></div>
<span class="t" style="top:59.00px;font-size:6.20px;color:#e0e0e0;font-weight:bold;left:1073.80px;transform:scaleX(0.9);transform-origin:0 0;">An</span>
<span class="t" style="top:68.00px;font-size:8.00px;color:#d0d0d0;left:1101.50px;transform:scaleX(0.93);transform-origin:0 0;">Безымянный-2</span>
<div class="abs" style="left:1053.00px;top:82.00px;width:200.40px;height:1.00px;background:#444444;"></div>
<svg class="abs" style="left:1056px;top:87px;overflow:visible;" width="7" height="4" viewBox="0 0 7 4"><g transform="translate(0.200 0.200)"><path d="M0 0h5.8L2.9 3.4z" fill="#e0e0e0"/></g></svg>
<span class="t" style="top:85.00px;font-size:8.00px;color:#d6d6d6;left:1066.00px;transform:scaleX(0.93);transform-origin:0 0;">Опубликовать</span>
<span class="t" style="top:103.00px;font-size:7.90px;color:#bdbdbd;right:182.40px;transform:scaleX(0.93);transform-origin:100% 0;">Профиль:</span>
<span class="t" style="top:103.00px;font-size:7.90px;color:#d0d0d0;left:1101.70px;transform:scaleX(0.95);transform-origin:0 0;">Default</span>
<div class="abs" style="left:1101.20px;top:112.80px;width:102.20px;height:11.80px;border:1px solid #6c6c6c;border-radius:2px;"></div>
<span class="t" style="top:116.00px;font-size:7.90px;color:#f4f4f4;left:1106.60px;transform:scaleX(0.93);transform-origin:0 0;">Параметры публикации...</span>
<div class="abs" style="left:1053.00px;top:129.30px;width:200.40px;height:1.00px;background:#444444;"></div>
<span class="t" style="top:136.00px;font-size:7.90px;color:#bdbdbd;right:182.40px;transform:scaleX(0.93);transform-origin:100% 0;">Цель:</span>
<div class="abs" style="left:1102.20px;top:134.10px;width:61.80px;height:10.20px;background:#444444;border-radius:2px;"></div>
<span class="t" style="top:136.00px;font-size:7.90px;color:#f4f4f4;left:1105.80px;transform:scaleX(0.93);transform-origin:0 0;">Flash Playe...</span>
<svg class="abs" style="left:1155px;top:137px;overflow:visible;" width="7" height="5" viewBox="0 0 7 5"><g transform="translate(0.800 0.800)"><path d="M0.4 0.4L2.8 2.9L5.2 0.4" stroke="#d8d8d8" stroke-width="1" fill="none"/></g></svg>
<span class="t" style="top:155.00px;font-size:7.90px;color:#bdbdbd;right:182.40px;transform:scaleX(0.93);transform-origin:100% 0;">Сценарий:</span>
<div class="abs" style="left:1102.20px;top:152.20px;width:61.80px;height:10.60px;background:#444444;border-radius:2px;"></div>
<span class="t" style="top:155.00px;font-size:7.90px;color:#f4f4f4;left:1105.80px;transform:scaleX(0.93);transform-origin:0 0;">ActionScrip...</span>
<svg class="abs" style="left:1155px;top:156px;overflow:visible;" width="7" height="4" viewBox="0 0 7 4"><g transform="translate(0.800 0.200)"><path d="M0.4 0.4L2.8 2.9L5.2 0.4" stroke="#d8d8d8" stroke-width="1" fill="none"/></g></svg>
<svg class="abs" style="left:1170px;top:153px;overflow:visible;" width="11" height="10" viewBox="0 0 11 10"><g transform="translate(0.600 0.300)"><path d="M2.6 0.4C1.4 0.6 0.4 1.6 0.4 2.9C0.4 4.3 1.5 5.4 2.9 5.4C3.2 5.4 3.5 5.3 3.8 5.2L7.4 8.9C7.8 9.3 8.5 9.3 8.9 8.9C9.3 8.5 9.3 7.8 8.9 7.4L5.2 3.8C5.3 3.5 5.4 3.2 5.4 2.9C5.4 1.9 4.8 1 4 0.6L4 2.6L2.9 3.4L1.8 2.6z" fill="#d2d2d2"/></g></svg>
<div class="abs" style="left:1053.00px;top:170.80px;width:200.40px;height:1.00px;background:#444444;"></div>
<span class="t" style="top:179.00px;font-size:7.90px;color:#bdbdbd;right:182.40px;transform:scaleX(0.93);transform-origin:100% 0;">Класс:</span>
<div class="abs" style="left:1102.20px;top:175.50px;width:61.80px;height:10.60px;background:#424242;border-radius:2px;"></div>
<svg class="abs" style="left:1171px;top:176px;overflow:visible;" width="9" height="9" viewBox="0 0 9 9"><g transform="translate(0.400 0.600)"><path d="M0.4 7.8L1 5.6L5.4 1.2L7 2.8L2.6 7.2z" fill="#d2d2d2"/><path d="M6 0.6L6.6 0.2C7 -0.1 7.6 0 7.9 0.4C8.3 0.8 8.3 1.4 8 1.8L7.6 2.2z" fill="#d2d2d2"/></g></svg>
<div class="abs" style="left:1053.00px;top:198.80px;width:200.40px;height:1.00px;background:#444444;"></div>
<svg class="abs" style="left:1056px;top:204px;overflow:visible;" width="7" height="5" viewBox="0 0 7 5"><g transform="translate(0.200 0.800)"><path d="M0 0h5.8L2.9 3.4z" fill="#e0e0e0"/></g></svg>
<span class="t" style="top:203.00px;font-size:8.00px;color:#d6d6d6;left:1066.00px;transform:scaleX(0.93);transform-origin:0 0;">Свойства</span>
<span class="t" style="top:220.00px;font-size:7.90px;color:#bdbdbd;right:182.40px;transform:scaleX(0.93);transform-origin:100% 0;">FPS:</span>
<span class="t" style="top:220.00px;font-size:7.90px;color:#f4f4f4;left:1102.50px;transform:scaleX(0.9);transform-origin:0 0;">24,00</span>
<div class="abs" style="left:1102.50px;top:228.20px;width:17.60px;height:1.00px;border-top:1px dotted #a8a8a8;"></div>
<div class="abs" style="left:1102.20px;top:238.40px;width:7.60px;height:7.60px;border:1px solid #b8b8b8;border-radius:1.5px;"></div>
<span class="t" style="top:239.00px;font-size:7.90px;color:#e8e8e8;left:1113.70px;transform:scaleX(0.93);transform-origin:0 0;">Масштаб. диапазоны кадров</span>
<div class="abs" style="left:1053.00px;top:253.50px;width:200.40px;height:1.00px;background:#444444;"></div>
<span class="t" style="top:260.00px;font-size:7.90px;color:#bdbdbd;right:182.40px;transform:scaleX(0.93);transform-origin:100% 0;">Размер:</span>
<span class="t" style="top:260.00px;font-size:7.90px;color:#a8a8a8;left:1102.20px;transform:scaleX(0.95);transform-origin:0 0;">Ш:</span>
<span class="t" style="top:260.00px;font-size:7.90px;color:#f4f4f4;left:1117.30px;transform:scaleX(0.9);transform-origin:0 0;">550</span>
<div class="abs" style="left:1117.30px;top:268.20px;width:11.80px;height:1.00px;border-top:1px dotted #a8a8a8;"></div>
<svg class="abs" style="left:1150px;top:259px;overflow:visible;" width="11" height="10" viewBox="0 0 11 10"><g transform="translate(0.200 0.400)"><path d="M3.6 1.2H2.8a2.6 3.2 0 0 0 0 6.4h0.8M6.4 1.2h0.8a2.6 3.2 0 0 1 0 6.4H6.4" stroke="#d0d0d0" stroke-width="1" fill="none" stroke-dasharray="1.6 0.8"/></g></svg>
<span class="t" style="top:260.00px;font-size:7.90px;color:#a8a8a8;left:1172.20px;transform:scaleX(0.95);transform-origin:0 0;">В:</span>
<span class="t" style="top:260.00px;font-size:7.90px;color:#f4f4f4;left:1188.10px;transform:scaleX(0.9);transform-origin:0 0;">400</span>
<div class="abs" style="left:1188.10px;top:268.20px;width:11.80px;height:1.00px;border-top:1px dotted #a8a8a8;"></div>
<span class="t" style="top:260.00px;font-size:7.90px;color:#bdbdbd;left:1225.60px;transform:scaleX(0.93);transform-origin:0 0;">пикс.</span>
<div class="abs" style="left:1102.20px;top:277.80px;width:7.60px;height:7.60px;border:1px solid #b8b8b8;border-radius:1.5px;"></div>
<span class="t" style="top:278.00px;font-size:7.90px;color:#e8e8e8;left:1113.70px;transform:scaleX(0.93);transform-origin:0 0;">Масштаб. содержимое</span>
<div class="abs" style="left:1101.70px;top:294.40px;width:119.80px;height:11.90px;border:1px solid #6c6c6c;border-radius:2px;"></div>
<span class="t" style="top:298.00px;font-size:7.90px;color:#f4f4f4;left:1161.00px;transform:translateX(-50%) scaleX(0.93);">Дополн. настройки...</span>
<div class="abs" style="left:1053.00px;top:313.40px;width:200.40px;height:1.00px;background:#444444;"></div>
<span class="t" style="top:321.00px;font-size:7.90px;color:#bdbdbd;right:182.40px;transform:scaleX(0.93);transform-origin:100% 0;">Монт. стол:</span>
<div class="abs" style="left:1103.30px;top:318.60px;width:20.00px;height:9.80px;background:#ffffff;border:1px solid #2c2c2c;border-radius:1.5px;"></div>
<div class="abs" style="left:1104.20px;top:335.70px;width:7.60px;height:7.60px;border:1px solid #b8b8b8;border-radius:1.5px;"></div>
<span class="t" style="top:336.00px;font-size:7.90px;color:#e8e8e8;left:1115.60px;transform:scaleX(0.93);transform-origin:0 0;">Применить к области вставки</span>
<div class="abs" style="left:1053.00px;top:356.00px;width:200.40px;height:1.00px;background:#444444;"></div>
<svg class="abs" style="left:1056px;top:361px;overflow:visible;" width="7" height="5" viewBox="0 0 7 5"><g transform="translate(0.200 0.800)"><path d="M0 0h5.8L2.9 3.4z" fill="#e0e0e0"/></g></svg>
<span class="t" style="top:360.00px;font-size:8.00px;color:#d6d6d6;left:1066.00px;transform:scaleX(0.93);transform-origin:0 0;">История SWF</span>
<div class="abs" style="left:1067.20px;top:372.10px;width:40.00px;height:12.00px;background:#595959;border-radius:2px;"></div>
<span class="t" style="top:375.00px;font-size:7.90px;color:#757575;left:1087.20px;transform:translateX(-50%) scaleX(0.93);">Журнал</span>
<div class="abs" style="left:1149.80px;top:372.10px;width:40.00px;height:12.00px;background:#595959;border-radius:2px;"></div>
<span class="t" style="top:375.00px;font-size:7.90px;color:#757575;left:1169.80px;transform:translateX(-50%) scaleX(0.93);">Удалить</span>
<div class="abs" style="left:1053.00px;top:438.20px;width:200.40px;height:1.00px;background:#444444;"></div>
<svg class="abs" style="left:1058px;top:441px;overflow:visible;" width="4" height="7" viewBox="0 0 4 7"><g transform="translate(0.200 0.800)"><path d="M0 0L3.2 2.7L0 5.4z" fill="#e0e0e0"/></g></svg>
<span class="t" style="top:441.00px;font-size:8.00px;color:#d6d6d6;left:1066.00px;transform:scaleX(0.93);transform-origin:0 0;">Расширенный доступ</span>
<div class="abs" style="left:1255.20px;top:28.70px;width:24.80px;height:664.30px;background:#535353;"></div>
<div class="abs" style="left:1255.20px;top:28.70px;width:24.80px;height:11.00px;background:#424242;"></div>
<svg class="abs" style="left:1268px;top:32px;overflow:visible;" width="8" height="6" viewBox="0 0 8 6"><g transform="translate(0.700 0.000)"><rect width="7" height="5.2" fill="#7c7c7c"/><rect width="7" height="1.7" fill="#b8b8b8"/><rect y="3.5" width="7" height="1.7" fill="#b8b8b8"/></g></svg>
<div class="abs" style="left:1255.20px;top:137.70px;width:24.80px;height:1.00px;background:#444444;"></div>
<div class="abs" style="left:1255.20px;top:307.20px;width:24.80px;height:1.00px;background:#444444;"></div>
<div class="abs" style="left:1255.20px;top:439.50px;width:24.80px;height:1.00px;background:#444444;"></div>
<div class="abs" style="left:1255.20px;top:499.70px;width:24.80px;height:1.00px;background:#444444;"></div>
<div class="abs" style="left:1255.20px;top:585.00px;width:24.80px;height:1.00px;background:#444444;"></div>
<div class="abs" style="left:1257.00px;top:43.40px;width:20.00px;height:15.60px;background:#2c2c2c;border-radius:2px;"></div>
<svg class="abs" style="left:1262px;top:45px;overflow:visible;" width="10" height="13" viewBox="0 0 10 13"><g transform="translate(0.600 0.800)"><path d="M0.7 0.9L0.7 10.6L3.2 8.2L8 8.2z" fill="none" stroke="#d2d2d2" stroke-width="1.1" stroke-linejoin="miter"/></g></svg>
<svg class="abs" style="left:1262px;top:64px;overflow:visible;" width="10" height="13" viewBox="0 0 10 13"><g transform="translate(0.600 0.000)"><path d="M0.4 0.4L0.4 12L3.4 9L8.6 9z" fill="#d2d2d2"/></g></svg>
<svg class="abs" style="left:1260px;top:83px;overflow:visible;" width="14" height="11" viewBox="0 0 14 11"><g transform="translate(0.700 0.000)"><path d="M0.2 0.2L0.2 8.4L2.4 6.4L6 6.4z" fill="#d2d2d2"/><rect x="3.6" y="1.2" width="8.4" height="7.6" fill="none" stroke="#d2d2d2" stroke-width="0.8" stroke-dasharray="1.2 0.9"/><rect x="10.8" y="0.2" width="2" height="2" fill="#d2d2d2"/><rect x="10.8" y="7.8" width="2" height="2" fill="#d2d2d2"/><rect x="3" y="7.8" width="2" height="2" fill="#d2d2d2"/></g></svg>
<svg class="abs" style="left:1274px;top:93px;overflow:visible;" width="4" height="4" viewBox="0 0 4 4"><g transform="translate(0.600 0.600)"><path d="M2.4 0v2.4H0z" fill="#e8e8e8"/></g></svg>
<svg class="abs" style="left:1260px;top:100px;overflow:visible;" width="13" height="13" viewBox="0 0 13 13"><g transform="translate(0.600 0.800)"><circle cx="6" cy="6" r="5.3" fill="#8a8a8a" stroke="#d2d2d2" stroke-width="0.9"/><ellipse cx="6" cy="6" rx="2.4" ry="5.3" fill="none" stroke="#d2d2d2" stroke-width="0.8"/><path d="M0.7 6h10.6" stroke="#d2d2d2" stroke-width="0.8"/></g></svg>
<svg class="abs" style="left:1274px;top:112px;overflow:visible;" width="4" height="4" viewBox="0 0 4 4"><g transform="translate(0.600 0.600)"><path d="M2.4 0v2.4H0z" fill="#e8e8e8"/></g></svg>
<svg class="abs" style="left:1261px;top:121px;overflow:visible;" width="12" height="11" viewBox="0 0 12 11"><g transform="translate(0.000 0.400)"><ellipse cx="6" cy="3.8" rx="5.2" ry="3.4" fill="none" stroke="#d2d2d2" stroke-width="1"/><path d="M3 6.6C2 7.6 2.6 8.8 3.8 8.4C4.6 8 4 7 3.2 7.2M3.6 8.4L4.8 10.2" fill="none" stroke="#d2d2d2" stroke-width="0.9"/></g></svg>
<svg class="abs" style="left:1274px;top:131px;overflow:visible;" width="4" height="4" viewBox="0 0 4 4"><g transform="translate(0.600 0.600)"><path d="M2.4 0v2.4H0z" fill="#e8e8e8"/></g></svg>
<svg class="abs" style="left:1261px;top:142px;overflow:visible;" width="12" height="12" viewBox="0 0 12 12"><g transform="translate(0.000 0.000)"><path d="M7.4 0.4L11.2 4.2L9.6 5L8.6 8.2L2 10.6L1 9.6L3.6 3.2L6.6 2z" fill="#d2d2d2"/><path d="M1.4 10.2L5 6.6" stroke="#535353" stroke-width="0.8"/><circle cx="5.4" cy="6.2" r="0.9" fill="#535353"/></g></svg>
<svg class="abs" style="left:1274px;top:152px;overflow:visible;" width="4" height="3" viewBox="0 0 4 3"><g transform="translate(0.600 0.400)"><path d="M2.4 0v2.4H0z" fill="#e8e8e8"/></g></svg>
<span class="t" style="top:160.00px;font-size:13.20px;color:#d2d2d2;font-weight:bold;left:1262.30px;transform:scaleX(1.05);transform-origin:0 0;font-family:'Liberation Serif',serif;">T</span>
<svg class="abs" style="left:1261px;top:178px;overflow:visible;" width="12" height="12" viewBox="0 0 12 12"><g transform="translate(0.000 0.400)"><path d="M0.6 10.8L11 0.6" stroke="#d2d2d2" stroke-width="1.1"/></g></svg>
<div class="abs" style="left:1260.90px;top:197.70px;width:11.20px;height:9.80px;background:#7c7c7c;border:1px solid #d2d2d2;"></div>
<svg class="abs" style="left:1274px;top:207px;overflow:visible;" width="4" height="4" viewBox="0 0 4 4"><g transform="translate(0.600 0.600)"><path d="M2.4 0v2.4H0z" fill="#e8e8e8"/></g></svg>
<div class="abs" style="left:1260.6px;top:216.4px;width:12.4px;height:9.6px;border-radius:50%;background:#7c7c7c;border:1px solid #d2d2d2"></div>
<svg class="abs" style="left:1274px;top:225px;overflow:visible;" width="4" height="4" viewBox="0 0 4 4"><g transform="translate(0.600 0.800)"><path d="M2.4 0v2.4H0z" fill="#e8e8e8"/></g></svg>
<svg class="abs" style="left:1261px;top:234px;overflow:visible;" width="12" height="12" viewBox="0 0 12 12"><g transform="translate(0.000 0.400)"><path d="M3 0.6h5.4L11 5.4L8.4 10.2H3L0.4 5.4z" fill="#7c7c7c" stroke="#d2d2d2" stroke-width="0.9"/></g></svg>
<svg class="abs" style="left:1261px;top:253px;overflow:visible;" width="12" height="12" viewBox="0 0 12 12"><g transform="translate(0.400 0.200)"><path d="M0.4 10.4L1.2 7.4L7.6 1L9.8 3.2L3.4 9.6z" fill="#d2d2d2"/><path d="M8.2 0.6L8.8 0.2C9.4 -0.1 10 0 10.4 0.4C10.8 0.8 10.9 1.4 10.6 2L10.2 2.6z" fill="#d2d2d2"/></g></svg>
<svg class="abs" style="left:1260px;top:271px;overflow:visible;" width="13" height="13" viewBox="0 0 13 13"><g transform="translate(0.400 0.600)"><path d="M11.8 0.4L12 1L7.2 6.6L5.6 5.2z" fill="#d2d2d2"/><path d="M5 5.8L6.6 7.2C6.4 9.4 4.6 10.2 3 9.4C3.8 9 4 8 3.8 7C4 6.2 4.4 5.8 5 5.8z" fill="#d2d2d2"/><path d="M4.4 10.2C2 11.6 0 10 0.6 8C1.2 6.2 3.4 6.2 3.6 7.6" fill="none" stroke="#d2d2d2" stroke-width="0.9"/></g></svg>
<svg class="abs" style="left:1261px;top:290px;overflow:visible;" width="12" height="12" viewBox="0 0 12 12"><g transform="translate(0.000 0.000)"><path d="M11 0.3L11.4 0.8L6.2 7L4.4 5.4z" fill="#d2d2d2"/><path d="M3.8 6L5.6 7.6C5.4 10 3 11 0.4 10.8C1.6 10 2 8.8 2 7.6C2.2 6.6 3 6 3.8 6z" fill="#d2d2d2"/></g></svg>
<svg class="abs" style="left:1261px;top:312px;overflow:visible;" width="12" height="13" viewBox="0 0 12 13"><g transform="translate(0.000 0.000)"><path d="M3.4 8.6L8.6 3.4" stroke="#d2d2d2" stroke-width="2.2"/><circle cx="2" cy="8.6" r="1.7" fill="#d2d2d2"/><circle cx="3.4" cy="10" r="1.7" fill="#d2d2d2"/><circle cx="8.6" cy="2" r="1.7" fill="#d2d2d2"/><circle cx="10" cy="3.4" r="1.7" fill="#d2d2d2"/></g></svg>
<svg class="abs" style="left:1274px;top:322px;overflow:visible;" width="4" height="4" viewBox="0 0 4 4"><g transform="translate(0.600 0.800)"><path d="M2.4 0v2.4H0z" fill="#e8e8e8"/></g></svg>
<svg class="abs" style="left:1260px;top:330px;overflow:visible;" width="14" height="13" viewBox="0 0 14 13"><g transform="translate(0.600 0.000)"><path d="M5.6 1.6L10.8 6.8L6 11.6L0.8 6.4z" fill="#d2d2d2"/><path d="M4.2 0.4C5.4 0 6.2 1 6 2.6" stroke="#d2d2d2" stroke-width="0.9" fill="none"/><path d="M10.8 6.8C12 8.2 12.4 9.4 12.2 11C11.4 10 10.6 9 9.4 8.2z" fill="#d2d2d2"/></g></svg>
<svg class="abs" style="left:1260px;top:348px;overflow:visible;" width="14" height="14" viewBox="0 0 14 14"><g transform="translate(0.400 0.600)"><path d="M3.4 1.2L6.8 4.6L3.6 7.8L0.4 4.4z" fill="#d2d2d2"/><path d="M2.2 0.4C3.2 0.2 3.8 0.8 3.8 2" stroke="#d2d2d2" stroke-width="0.8" fill="none"/><path d="M6.8 4.6C7.6 5.6 7.8 6.4 7.6 7.4L6 6z" fill="#d2d2d2"/><path d="M6.4 3h5.6v7.8H5v-2.6" fill="none" stroke="#d2d2d2" stroke-width="1.2"/></g></svg>
<svg class="abs" style="left:1261px;top:367px;overflow:visible;" width="12" height="13" viewBox="0 0 12 13"><g transform="translate(0.000 0.400)"><path d="M0.6 11.8L1 9.6L6.2 4.4L7.8 6L2.6 11.2z" fill="none" stroke="#d2d2d2" stroke-width="0.9"/><path d="M5.8 3.2L9 6.4L9.8 5.6L9 4.6L10.6 3C11.4 2.2 11.4 1.2 10.8 0.6C10.2 0 9.2 0 8.4 0.8L6.8 2.4L5.8 1.6L5 2.4z" fill="#d2d2d2"/></g></svg>
<svg class="abs" style="left:1260px;top:386px;overflow:visible;" width="14" height="12" viewBox="0 0 14 12"><g transform="translate(0.800 0.000)"><path d="M5.8 0.6L11.6 4.6L6.8 11L1 7z" fill="#d2d2d2"/><path d="M0.6 7.6L6.2 11.4" stroke="#d2d2d2" stroke-width="1"/><path d="M3 4.4L8.8 8.4" stroke="#535353" stroke-width="0.8"/></g></svg>
<svg class="abs" style="left:1260px;top:404px;overflow:visible;" width="14" height="14" viewBox="0 0 14 14"><g transform="translate(0.400 0.600)"><path d="M0.6 10.4C3 10.4 3.4 4.4 6 4.4C8 4.4 7.6 8.4 9.6 8.4C11 8.4 11.6 6.6 12.4 5.6" fill="none" stroke="#d2d2d2" stroke-width="1.6"/><path d="M6 0.4L7.6 2.6H4.4zM6 12L7.6 9.8H4.4z" fill="#d2d2d2"/><path d="M6 2.4v7.6" stroke="#d2d2d2" stroke-width="0.8"/></g></svg>
<svg class="abs" style="left:1261px;top:422px;overflow:visible;" width="12" height="13" viewBox="0 0 12 13"><g transform="translate(0.000 0.600)"><path d="M6.4 0.4L11.2 5.2L10 5.6L8.6 7.2L8.6 9.6L2 3L4.4 3L6 1.6z" fill="#d2d2d2"/><path d="M4.6 7L0.6 11.4" stroke="#d2d2d2" stroke-width="1.1"/></g></svg>
<svg class="abs" style="left:1260px;top:445px;overflow:visible;" width="15" height="10" viewBox="0 0 15 10"><g transform="translate(0.000 0.200)"><rect x="0" y="0.6" width="8.6" height="8.4" rx="0.8" fill="#6e6e6e"/><path d="M9 4.8L13.6 1v7.6z" fill="#6e6e6e"/></g></svg>
<svg class="abs" style="left:1260px;top:462px;overflow:visible;" width="13" height="14" viewBox="0 0 13 14"><g transform="translate(0.800 0.400)"><path d="M3.4 13C2.4 11.4 0.6 9 0.4 8C0.2 7 1.2 6.6 2 7.4L3 8.6V2.4C3 1.4 4.4 1.4 4.4 2.4V6V1.2C4.4 0.2 5.8 0.2 5.8 1.2V6V1.6C5.8 0.6 7.2 0.6 7.2 1.6V6.2V2.8C7.2 1.8 8.6 1.8 8.6 2.8V9C8.6 10.6 8.2 11.8 7.6 13z" fill="#d2d2d2" stroke="#d2d2d2" stroke-width="0.5"/></g></svg>
<svg class="abs" style="left:1274px;top:473px;overflow:visible;" width="4" height="4" viewBox="0 0 4 4"><g transform="translate(0.600 0.600)"><path d="M2.4 0v2.4H0z" fill="#e8e8e8"/></g></svg>
<svg class="abs" style="left:1261px;top:482px;overflow:visible;" width="12" height="13" viewBox="0 0 12 13"><g transform="translate(0.400 0.800)"><circle cx="4.4" cy="4.4" r="3.6" fill="none" stroke="#d2d2d2" stroke-width="1.2"/><path d="M7 7.2L10.4 10.8" stroke="#d2d2d2" stroke-width="1.6"/></g></svg>
<svg class="abs" style="left:1263px;top:505px;overflow:visible;" width="9" height="10" viewBox="0 0 9 10"><g transform="translate(0.400 0.600)"><path d="M0.4 8L1 5.8L5.4 1.4L7 3L2.6 7.4z" fill="#d2d2d2"/><path d="M6 0.8L6.6 0.3C7 0 7.6 0 7.9 0.4C8.3 0.8 8.3 1.4 8 1.8L7.6 2.4z" fill="#d2d2d2"/></g></svg>
<svg class="abs" style="left:1260px;top:520px;overflow:visible;" width="14" height="13" viewBox="0 0 14 13"><g transform="translate(0.900 0.400)"><rect x="0.4" y="0.4" width="11.6" height="11.4" fill="#ffffff" stroke="#2a2a2a" stroke-width="0.8"/><path d="M0.8 11.4L11.6 0.8" stroke="#d02028" stroke-width="0.9"/></g></svg>
<div class="abs" style="left:1260.90px;top:539.30px;width:11.80px;height:11.40px;background:#2c2c2c;border-radius:1.5px;"></div>
<div class="abs" style="left:1263.20px;top:541.60px;width:7.20px;height:6.80px;background:#8a8a8a;border:1px solid #dcdcdc;"></div>
<div class="abs" style="left:1260.30px;top:552.70px;width:13.50px;height:13.00px;background:#0b64d8;border:0.8px solid #2a2a2a;"></div>
<svg class="abs" style="left:1257px;top:571px;overflow:visible;" width="9" height="9" viewBox="0 0 9 9"><g transform="translate(0.700 0.300)"><rect x="2.4" y="2.6" width="4.8" height="4.8" fill="#111" stroke="#e8e8e8" stroke-width="0.7"/><rect x="0.4" y="0.4" width="4.6" height="4.6" fill="#fff" stroke="#111" stroke-width="0.7"/></g></svg>
<svg class="abs" style="left:1267px;top:571px;overflow:visible;" width="9" height="9" viewBox="0 0 9 9"><g transform="translate(0.600 0.300)"><rect x="0.4" y="0.4" width="3" height="3" fill="#6c6c6c"/><rect x="4.2" y="4.2" width="3" height="3" fill="#6c6c6c"/><path d="M4.6 1.4H6.6V3.4M3.2 6.4H1.2V4.4" stroke="#6c6c6c" stroke-width="0.8" fill="none"/></g></svg>
<div class="abs" style="left:1257.20px;top:588.90px;width:19.20px;height:15.50px;background:#2c2c2c;border-radius:2px;"></div>
<svg class="abs" style="left:1262px;top:592px;overflow:visible;" width="10" height="10" viewBox="0 0 10 10"><g transform="translate(0.400 0.000)"><path d="M1.2 9.2V4.4a3.5 3.5 0 0 1 7 0V9.2" fill="none" stroke="#bdbdbd" stroke-width="2.2"/></g></svg>
<svg class="abs" style="left:1263px;top:609px;overflow:visible;" width="8" height="13" viewBox="0 0 8 13"><g transform="translate(0.600 0.600)"><path d="M5.6 1C3 0 0.6 1.6 1.2 3.6C1.8 5.6 5.4 5.6 5.4 8C5.4 10 2.6 11 0.6 9.8" fill="none" stroke="#6c6c6c" stroke-width="0.9"/></g></svg>
<svg class="abs" style="left:1264px;top:628px;overflow:visible;" width="6" height="11" viewBox="0 0 6 11"><g transform="translate(0.000 0.000)"><path d="M1 0.4V5.4H4.4V10.4" fill="none" stroke="#6c6c6c" stroke-width="0.9"/></g></svg>
<div class="abs" style="left:0.00px;top:20.00px;width:0.90px;height:673.00px;background:#3e3e3e;"></div>
<div class="abs" style="left:1024.00px;top:692.00px;width:256.00px;height:1.00px;background:#404040;"></div>
<div class="abs" style="left:1279.00px;top:28.00px;width:1.00px;height:665.00px;background:#424242;"></div>
</div>
</body></html>
